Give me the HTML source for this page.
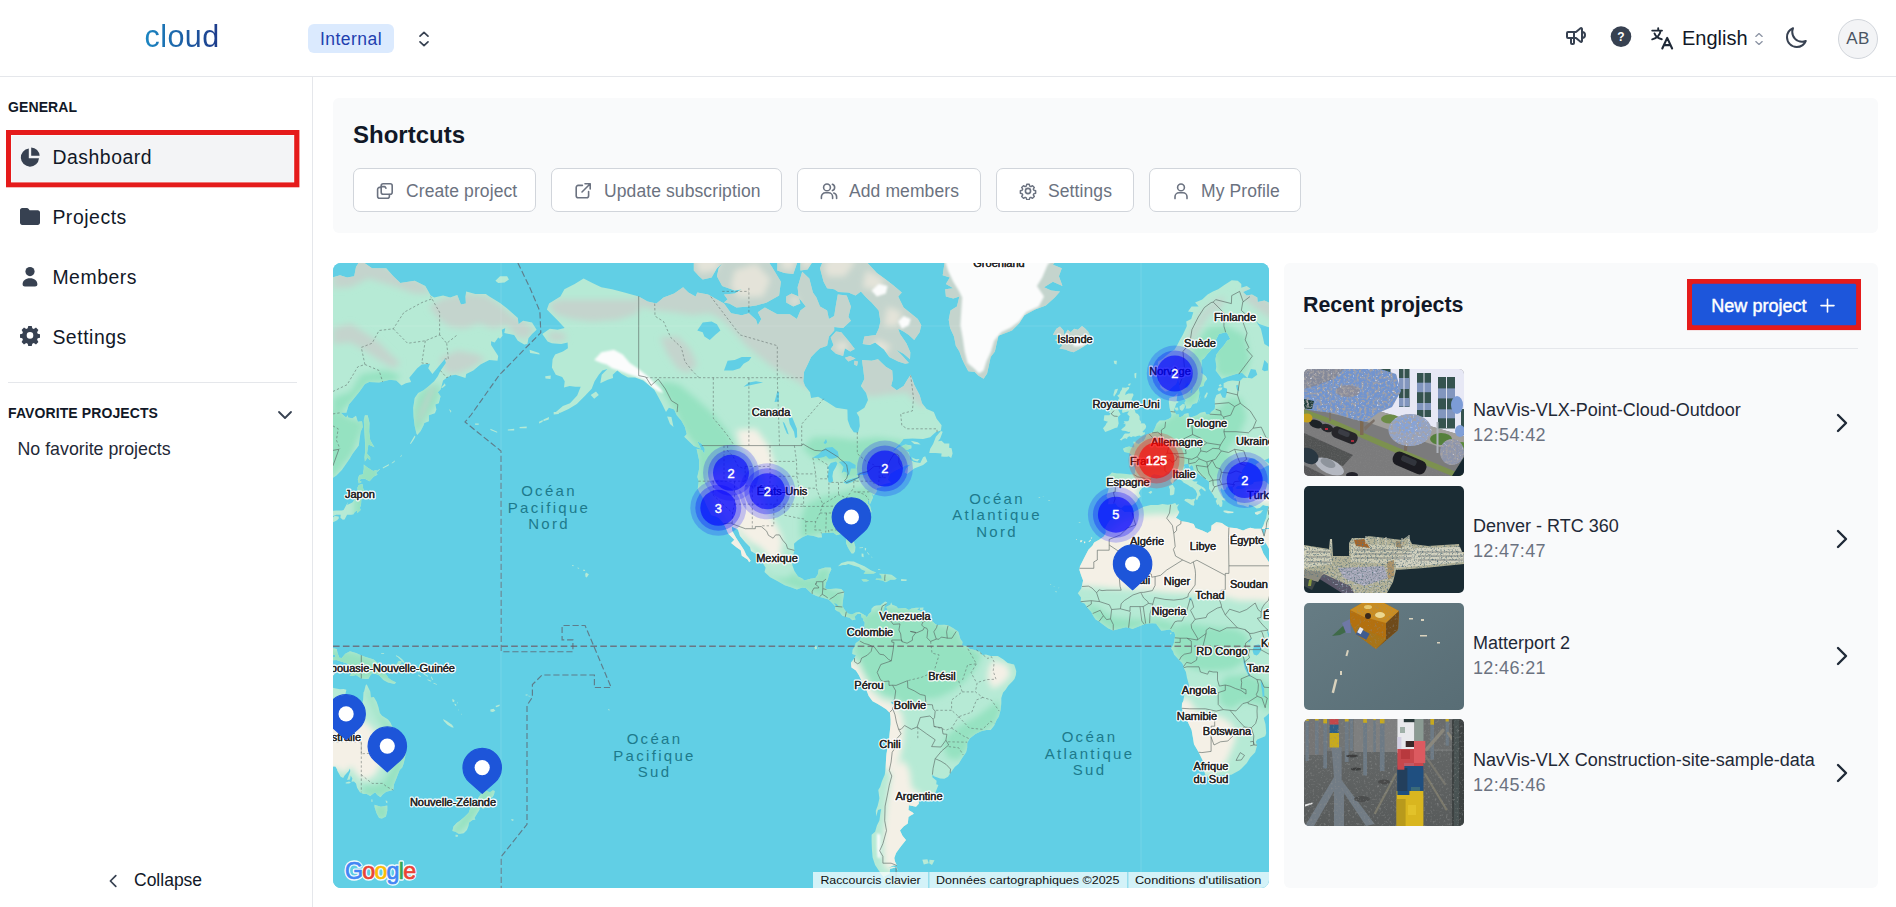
<!DOCTYPE html>
<html lang="en">
<head>
<meta charset="utf-8">
<title>Dashboard</title>
<style>
*{box-sizing:border-box;margin:0;padding:0}
html,body{width:1896px;height:907px;overflow:hidden;background:#fff}
body{font-family:"Liberation Sans",sans-serif;color:#1f2937;position:relative}
.a{position:absolute;white-space:nowrap;line-height:1}
.hdr{left:0;top:0;width:1896px;height:77px;border-bottom:1px solid #e5e7eb;background:#fff}
.side{left:0;top:77px;width:313px;height:830px;border-right:1px solid #e5e7eb;background:#fff}
.logo{left:144.5px;top:21px;font-size:30.5px;letter-spacing:.45px;background:linear-gradient(90deg,#1b86c2 0%,#1e3a8a 100%);-webkit-background-clip:text;background-clip:text;color:transparent;}
.badge{left:308px;top:24px;width:86px;height:29px;border-radius:6px;background:#dbeafe;color:#1e40af;font-size:17.5px;text-align:center;line-height:31px;letter-spacing:.45px}
.sec{font-weight:700;font-size:14px;color:#111827;letter-spacing:.1px}
.nav{font-size:19.4px;color:#111827;left:52.4px;letter-spacing:.55px;margin-top:.6px}
.sel{left:6px;top:130px;width:293px;height:57px;border:4.5px solid #e8171c;background:#f3f4f6}
.panel{background:#f9fafb;border-radius:6px}
.h2{font-weight:700;color:#111827}
.btn{top:168px;height:44px;border:1px solid #d1d5db;border-radius:7px;background:#fff;color:#6b7280;font-size:17.5px;letter-spacing:.1px}
.btn span{position:absolute;top:12.5px;line-height:18px}
.btn svg{position:absolute;top:13px;width:18px;height:18px;fill:none;stroke:#6b7280;stroke-width:1.6;stroke-linecap:round;stroke-linejoin:round}
.thumb{left:1304px;width:160px;height:107px;border-radius:5px;overflow:hidden}
.pt{left:1473px;font-size:18px;color:#1f2937;margin-top:.4px}
.ps{left:1473px;font-size:18px;color:#6b7280;letter-spacing:.35px;margin-top:.3px}
.chev{left:1834px;width:16px;height:22px;fill:none;stroke:#1f2937;stroke-width:2.4;stroke-linecap:round;stroke-linejoin:round}
svg{display:block}
</style>
</head>
<body>
<!-- HEADER -->
<div class="a hdr"></div>
<div class="a logo">cloud</div>
<div class="a badge">Internal</div>
<svg class="a" style="left:418px;top:30px;width:12px;height:18px" viewBox="0 0 12 18" fill="none" stroke="#374151" stroke-width="1.7" stroke-linecap="round" stroke-linejoin="round"><path d="M2 6.2 6 2.4l4 3.8M2 11.8 6 15.6l4-3.8"/></svg>

<!-- header right icons -->
<svg class="a" style="left:1564.4px;top:24.4px;width:24px;height:24px" viewBox="0 0 24 24" fill="none" stroke="#374151" stroke-width="2" stroke-linecap="round" stroke-linejoin="round"><path d="M18 8a3 3 0 0 1 0 6"/><path d="M10 8v11a1 1 0 0 1-1 1H8a1 1 0 0 1-1-1v-5"/><path d="M12 8l4.524-3.770a.9.9 0 0 1 1.476.692v12.156a.9.9 0 0 1-1.476.692L12 14H4a1 1 0 0 1-1-1V9a1 1 0 0 1 1-1h8"/></svg>
<svg class="a" style="left:1610px;top:26px;width:22px;height:22px" viewBox="0 0 22 22"><circle cx="11" cy="10.6" r="10.3" fill="#374151"/><text x="11" y="15" font-family="Liberation Sans,sans-serif" font-weight="700" font-size="12" text-anchor="middle" fill="#fff">?</text></svg>
<svg class="a" style="left:1650px;top:26px;width:25px;height:25px" viewBox="0 0 25 25" fill="none" stroke="#1f2937" stroke-width="1.900" stroke-linecap="round" stroke-linejoin="round"><path d="M2.200 4.600H12M8.200 2.200v2.400M10.600 4.800C10 8.600 7.400 11.900 2.200 13.400M4.500 7.400C5.600 10.300 8 12.500 11.800 13.300"/><path d="M12.300 22.500l4.900-10.600 4.900 10.600M14 19.100h6.400" stroke-width="2.100"/></svg>
<div class="a" style="left:1682px;top:27px;font-size:20px;color:#111827;line-height:22px">English</div>
<svg class="a" style="left:1754px;top:32px;width:10px;height:14px" viewBox="0 0 10 14" fill="none" stroke="#8b93a3" stroke-width="1.300" stroke-linecap="round" stroke-linejoin="round"><path d="M1.800 4.400 5 1.600l3.200 2.800M1.800 9.600 5 12.400l3.200-2.800"/></svg>
<svg class="a" style="left:1783.6px;top:26.300px;width:24px;height:24px" viewBox="0 0 24 24" fill="none" stroke="#374151" stroke-width="2" stroke-linecap="round" stroke-linejoin="round"><path d="M21.752 15.002A9.718 9.718 0 0 1 18 15.750c-5.385 0-9.750-4.365-9.750-9.750 0-1.330.266-2.597.748-3.752A9.753 9.753 0 0 0 3 11.250C3 16.635 7.365 21 12.750 21a9.753 9.753 0 0 0 9.002-5.998z"/></svg>
<div class="a" style="left:1838px;top:19px;width:40px;height:40px;border-radius:50%;background:#f3f4f6;border:1px solid #d1d5db;color:#4b5563;font-size:17px;text-align:center;line-height:38px;letter-spacing:.3px">AB</div>

<!-- SIDEBAR -->
<div class="a side"></div>
<div class="a sec" style="left:8px;top:100px">GENERAL</div>
<svg class="a" style="left:0;top:125px;width:312px;height:70px" viewBox="0 125 312 70"><rect x="6" y="130" width="293.400" height="57.300" fill="#e51b1b"/><rect x="11" y="135" width="283.200" height="47.400" fill="#fbfeff"/><rect x="11.600" y="135.600" width="282" height="46.200" fill="#f3f4f6"/></svg>
<svg class="a" style="left:20px;top:147px;width:20px;height:20px" viewBox="0 0 20 20"><path d="M8.8 1.500A9.100 9.100 0 1 0 19 11.200H8.800z" fill="#374151"/><path d="M11.200 0.400v8.400h8.400A8.600 8.600 0 0 0 11.200 .4z" fill="#374151"/></svg>
<div class="a nav" style="top:147px">Dashboard</div>
<svg class="a" style="left:20px;top:207px;width:20px;height:20px" viewBox="0 0 20 20"><path d="M0 3.200C0 2 1 1 2.200 1h4.600c.8 0 1.500.4 1.900 1l.9 1.300h8.200c1.200 0 2.200 1 2.200 2.200v10.300c0 1.200-1 2.200-2.200 2.200H2.200C1 18 0 17 0 15.800z" fill="#374151"/></svg>
<div class="a nav" style="top:207px">Projects</div>
<svg class="a" style="left:20px;top:266px;width:20px;height:22px" viewBox="0 0 20 22"><circle cx="10" cy="5.600" r="4.600" fill="#374151"/><path d="M2.600 18.200c0-3.600 3-6 7.400-6s7.400 2.400 7.400 6c0 1.300-1 2.300-2.300 2.300H4.900c-1.300 0-2.300-1-2.300-2.300z" fill="#374151"/></svg>
<div class="a nav" style="top:267px">Members</div>
<svg class="a" style="left:20px;top:326px;width:20px;height:20px" viewBox="0 0 20 20"><path fill="#374151" fill-rule="evenodd" d="M8.300 0.400h3.400l.6 2.500 1.500.6 2.200-1.300 2.400 2.400-1.300 2.200.6 1.500 2.500.6v3.400l-2.500.6-.6 1.500 1.300 2.200-2.400 2.400-2.200-1.300-1.500.6-.6 2.500H8.300l-.6-2.500-1.500-.6L4 19l-2.400-2.400 1.300-2.200-.6-1.500-2.500-.6V8.900l2.500-.6.6-1.500L1.600 4.600 4 2.200l2.200 1.300 1.500-.6zM10 6.700a3.300 3.300 0 1 0 0 6.600 3.300 3.300 0 0 0 0-6.600z" transform="translate(0 -.6)"/></svg>
<div class="a nav" style="top:327px">Settings</div>
<div class="a" style="left:8px;top:382px;width:289px;height:1px;background:#e5e7eb"></div>
<div class="a sec" style="left:8px;top:406px">FAVORITE PROJECTS</div>
<svg class="a" style="left:277px;top:409px;width:16px;height:12px" viewBox="0 0 16 12" fill="none" stroke="#374151" stroke-width="1.800" stroke-linecap="round" stroke-linejoin="round"><path d="M2 3l6 6 6-6"/></svg>
<div class="a" style="left:17.5px;top:441px;font-size:17.8px;color:#1f2937">No favorite projects</div>
<svg class="a" style="left:107px;top:873px;width:12px;height:16px" viewBox="0 0 12 16" fill="none" stroke="#374151" stroke-width="1.700" stroke-linecap="round" stroke-linejoin="round"><path d="M8.800 2.600 3.400 8l5.400 5.400"/></svg>
<div class="a" style="left:134px;top:872px;font-size:17.5px;color:#111827">Collapse</div>

<!-- SHORTCUTS -->
<div class="a panel" style="left:333px;top:98px;width:1545px;height:135px"></div>
<div class="a h2" style="left:353px;top:123px;font-size:24px">Shortcuts</div>
<div class="a btn" style="left:353px;width:183px"><svg style="left:22px" viewBox="0 0 18 18"><rect x="5.200" y="1.800" width="11" height="10.400" rx="2"/><path d="M5 5.400H3.600a2 2 0 0 0-2 2v6.800a2 2 0 0 0 2 2h7.800a2 2 0 0 0 2-2v-1.600"/><path d="M5.200 4.600h3.600l1.200 1.600"/></svg><span style="left:52px">Create project</span></div>
<div class="a btn" style="left:551px;width:231px"><svg style="left:22px" viewBox="0 0 18 18"><path d="M8.400 3.400H4.200a2 2 0 0 0-2 2v8.400a2 2 0 0 0 2 2h8.400a2 2 0 0 0 2-2V9.600"/><path d="M8 10l8-8M11 1.800h5.200V7"/></svg><span style="left:52px">Update subscription</span></div>
<div class="a btn" style="left:797px;width:184px"><svg style="left:22px" viewBox="0 0 18 18"><circle cx="7" cy="5.400" r="3.400"/><path d="M1.400 16.400v-1.600c0-2.200 1.800-4 4-4h3.200c2.200 0 4 1.800 4 4v1.600"/><path d="M12.400 2.200a3.400 3.400 0 0 1 0 6.400M16.600 16.400v-1.600c0-1.800-1.200-3.300-2.800-3.800"/></svg><span style="left:51px">Add members</span></div>
<div class="a btn" style="left:996px;width:138px"><svg style="left:22px" viewBox="0 0 18 18"><circle cx="9" cy="9" r="2.600"/><path d="M7.600 1.600h2.800l.5 2 1.300.6 1.800-1.100 2 2-1.100 1.800.6 1.300 2 .5v2.800l-2 .5-.6 1.300 1.100 1.800-2 2-1.800-1.100-1.300.6-.5 2H7.600l-.5-2-1.300-.6L4 17.100l-2-2 1.100-1.800-.6-1.300-2-.5V8.700l2-.5.6-1.300L2 5.100l2-2 1.800 1.100 1.300-.6z" transform="translate(.9 .9) scale(.9)"/></svg><span style="left:51px">Settings</span></div>
<div class="a btn" style="left:1149px;width:152px"><svg style="left:22px" viewBox="0 0 18 18"><circle cx="9" cy="5.400" r="3.400"/><path d="M3 16.600v-1.800c0-2.200 1.800-4 4-4h4c2.200 0 4 1.800 4 4v1.800"/></svg><span style="left:51px">My Profile</span></div>

<!-- RECENT PROJECTS -->
<div class="a panel" style="left:1284px;top:263px;width:594px;height:625px"></div>
<div class="a h2" style="left:1303px;top:295px;font-size:21.4px">Recent projects</div>
<svg class="a" style="left:1680px;top:270px;width:190px;height:70px" viewBox="1680 270 190 70"><rect x="1687" y="279" width="174" height="51.100" fill="#e51b1b"/><rect x="1692" y="283.800" width="164.100" height="41.500" rx="1.500" fill="#1d56db"/><path d="M1827.500 299.200v12.800M1821 305.600h13" stroke="#fff" stroke-width="1.600" stroke-linecap="round" fill="none"/></svg>
<div class="a" style="left:1711.300px;top:296.500px;font-size:18px;color:#fff;-webkit-text-stroke:.45px #fff;letter-spacing:.02px">New project</div>
<div class="a" style="left:1304px;top:348px;width:554px;height:1px;background:#e5e7eb"></div>

<!-- MAP -->
<svg class="a" style="left:333px;top:263px;width:936px;height:625px;border-radius:8px;background:#61cfe5" width="936" height="625" viewBox="0 0 936 625">
<defs><clipPath id="landclip"><path d="M209.3,71.0 216.8,65.8 224.6,66.7 231.7,64.9 225.0,57.7 213.9,46.5 216.1,40.6 227.4,33.6 231.4,26.3 241.7,21.0 250.6,15.5 259.4,19.9 268.3,24.2 279.0,26.3 291.4,29.5 305.7,33.6 314.6,38.6 323.4,40.6 330.6,34.6 341.2,30.5 350.1,24.2 355.4,29.5 362.6,33.6 364.3,29.5 375.0,31.5 391.0,40.6 398.1,50.3 408.8,52.2 415.9,50.3 423.0,56.8 424.8,62.2 428.3,55.9 424.8,49.3 431.9,44.5 444.3,51.2 456.8,51.2 463.9,55.9 467.4,47.4 472.8,43.6 465.7,34.6 464.6,24.2 469.2,8.7 476.3,15.5 479.9,29.5 483.4,34.6 487.0,43.6 494.1,47.4 495.9,55.9 501.2,53.1 503.0,41.6 504.8,31.5 513.7,32.6 517.9,43.6 515.4,54.0 517.9,57.7 510.1,64.9 501.2,64.0 501.2,67.5 495.9,73.6 494.1,82.7 487.0,85.2 483.4,88.4 478.1,93.9 474.6,101.5 471.0,109.0 470.3,118.2 472.1,123.1 477.0,129.2 478.1,135.1 485.2,133.8 494.1,139.0 503.0,144.7 514.4,146.6 514.7,157.0 517.2,164.1 520.8,169.2 525.0,169.8 526.8,162.9 526.1,154.0 523.6,149.7 531.4,144.7 535.0,137.1 533.2,129.9 527.9,123.1 531.4,116.1 530.4,107.5 529.0,97.0 538.6,97.8 545.0,96.2 552.8,103.8 559.2,107.5 559.9,116.1 558.1,123.1 563.8,127.2 570.6,123.1 574.8,116.1 577.7,111.8 581.2,121.7 586.6,131.9 589.0,140.3 593.7,146.0 600.8,149.1 603.6,155.8 608.6,162.3 607.9,167.5 602.6,169.2 597.2,174.3 590.1,176.0 579.4,175.4 570.6,176.0 567.0,180.4 561.7,185.3 557.4,191.6 553.8,194.3 558.8,190.1 565.2,184.7 572.3,181.5 578.4,182.6 578.4,185.3 572.3,187.4 575.9,189.5 576.6,193.2 577.7,197.3 581.2,198.9 587.3,199.9 590.1,194.3 592.2,193.2 594.4,198.4 590.1,201.9 581.2,205.5 574.1,210.9 571.6,209.4 573.0,205.5 577.7,201.4 572.3,202.4 568.8,204.5 563.4,206.9 557.4,210.4 555.6,214.8 554.9,216.7 557.0,218.6 558.1,219.6 553.8,220.5 549.2,221.7 545.0,223.1 551.0,223.4 543.9,225.0 543.5,229.0 540.7,232.4 538.6,230.4 540.0,234.5 537.8,239.4 536.8,241.4 535.4,235.8 534.6,240.3 537.1,243.0 538.6,248.9 535.0,251.5 530.0,254.7 525.4,257.7 522.6,260.1 519.0,262.8 517.6,269.0 518.3,272.7 520.6,277.6 522.4,284.0 522.0,288.4 520.4,290.6 518.6,290.6 516.2,286.8 514.4,283.6 513.0,280.0 513.0,275.6 510.8,272.7 508.3,270.7 503.7,272.3 500.2,269.5 495.9,269.9 492.3,269.9 488.4,270.3 489.1,274.4 485.2,274.6 480.6,272.9 474.6,272.1 469.9,274.0 464.6,277.6 461.0,280.8 461.4,287.6 459.6,295.1 459.3,302.0 461.4,308.1 465.0,313.4 469.2,315.5 471.4,317.4 477.4,315.7 482.4,314.9 484.9,311.2 485.6,306.6 492.3,304.5 497.7,304.5 498.4,306.6 495.9,311.5 494.8,316.4 493.0,319.4 492.0,324.6 493.8,326.3 497.7,325.9 503.0,325.5 508.3,326.1 511.2,329.0 510.1,336.4 509.4,342.9 511.9,347.3 515.1,350.5 519.0,351.4 522.9,349.4 526.1,348.9 530.7,351.6 532.2,352.7 531.4,356.6 528.6,354.5 527.9,350.9 524.3,351.0 521.5,353.7 522.6,356.4 519.4,357.2 516.5,354.8 512.2,353.7 509.4,352.7 506.2,348.7 504.4,348.3 501.9,346.5 502.3,343.3 498.4,339.3 495.5,336.4 490.6,335.1 483.4,333.1 478.8,330.7 472.8,325.0 469.2,324.6 463.9,326.5 458.6,324.6 451.8,322.2 444.3,318.1 437.2,314.2 431.5,308.9 432.6,304.7 428.7,298.2 423.0,291.1 418.0,288.0 417.0,284.0 412.3,279.2 407.0,273.1 404.9,266.6 398.8,263.6 399.2,267.8 403.1,274.8 407.0,280.8 410.9,286.8 413.4,292.3 415.2,294.3 417.7,297.8 416.2,299.3 414.5,296.6 408.8,292.7 407.7,287.2 403.4,284.2 398.1,280.0 401.3,276.8 395.3,270.7 392.1,263.6 390.3,259.9 386.0,255.2 382.8,253.5 378.2,252.2 373.6,243.0 371.4,237.6 366.8,229.9 364.7,225.7 365.8,218.2 364.3,214.1 366.1,206.0 366.1,197.3 363.6,185.8 369.0,186.9 371.4,191.1 371.8,185.8 369.0,180.9 364.3,178.2 367.9,185.8 360.8,183.1 356.9,179.3 351.2,173.8 353.7,170.9 351.9,164.1 348.3,157.6 343.7,152.2 341.2,146.6 335.9,144.7 333.0,149.1 328.4,139.7 324.9,133.2 321.3,126.8 316.3,122.4 310.3,117.5 302.1,114.4 295.0,114.4 288.6,111.1 284.3,107.5 279.7,111.8 280.1,115.1 274.7,116.8 267.3,120.3 268.7,111.8 274.4,106.0 269.4,107.5 265.8,111.8 261.6,118.2 258.7,125.8 252.3,132.5 243.8,140.9 235.6,146.0 227.4,149.7 221.4,150.3 229.9,142.9 237.0,140.3 244.2,132.5 247.7,123.8 242.4,123.8 236.7,123.1 231.0,124.5 231.7,118.2 229.2,114.0 222.8,111.8 218.9,104.5 219.6,96.2 222.1,91.6 229.9,88.4 234.9,85.2 234.6,79.4 228.2,81.1 218.9,80.3 214.6,78.6 209.3,71.0ZM588.3,62.2 584.8,55.9 577.7,50.3 570.6,44.5 565.2,33.6 568.8,29.5 559.9,22.1 552.8,16.6 543.9,9.9 535.0,0.6 526.1,-10.4 519.0,-14.2 504.8,-11.6 492.3,-7.9 487.0,5.3 490.6,18.8 494.1,25.3 501.2,26.3 505.5,28.9 515.4,29.5 522.6,32.6 527.9,28.4 533.2,34.6 538.6,39.6 545.7,47.4 547.4,58.6 545.7,65.8 542.8,71.9 531.4,73.6 529.7,81.1 536.8,81.9 542.1,79.4 551.0,86.4 556.3,93.9 565.2,98.5 572.3,100.8 575.9,100.0 569.5,93.1 563.4,86.8 570.6,90.8 577.0,96.2 577.3,89.2 573.4,80.3 567.0,71.0 565.2,65.8 570.6,68.4 575.9,71.9 581.2,76.9 586.6,69.3 588.3,62.2ZM391.0,39.6 396.3,40.6 403.4,44.5 415.9,43.6 423.0,42.6 433.7,39.6 446.1,32.6 447.9,18.8 439.0,4.1 433.7,-4.2 423.0,-7.9 412.3,-3.0 401.7,-6.7 391.0,-1.8 385.7,5.3 383.9,13.3 389.2,23.1 401.7,27.4 408.8,26.3 401.7,30.5 391.0,31.5 394.6,36.6 391.0,39.6ZM369.7,16.6 378.6,14.4 383.9,5.3 394.6,-4.2 398.1,-11.6 389.2,-19.3 376.8,-23.3 364.3,-19.3 360.8,-4.2 360.8,7.6 366.1,13.3 369.7,16.6ZM453.2,39.6 460.3,43.6 467.4,40.6 465.7,33.6 458.6,30.5 453.2,33.6 453.2,39.6ZM444.3,7.6 451.4,9.9 460.3,11.0 463.9,0.6 462.1,-14.2 451.4,-16.7 444.3,-6.7 444.3,7.6ZM467.4,7.6 474.6,6.4 479.9,-1.8 485.2,-14.2 476.3,-19.3 467.4,-12.9 467.4,7.6ZM497.7,74.4 503.0,68.4 508.3,69.3 515.4,77.8 521.8,86.0 517.2,88.4 511.9,85.2 510.1,93.1 503.0,90.8 497.7,86.0 500.5,81.9 497.7,74.4ZM511.9,94.7 517.2,93.1 522.6,95.4 515.4,98.5 511.9,94.7ZM521.5,97.8 525.0,98.5 524.0,103.0 521.1,101.5ZM596.2,190.1 597.2,185.8 600.1,180.9 602.9,173.8 607.9,168.1 609.7,168.7 607.2,175.4 605.0,178.2 608.6,177.7 611.4,180.4 616.4,180.4 616.1,184.7 618.6,185.3 619.6,190.6 618.2,195.0 615.7,193.2 614.3,193.7 610.7,193.7 608.2,193.5 608.6,190.6 602.6,190.1 596.2,190.1ZM577.7,177.7 584.8,179.3 587.6,181.5 581.2,180.9 577.7,177.7ZM578.4,194.3 583.0,196.3 586.6,196.1 584.4,198.4 580.2,197.3 578.4,194.3ZM334.1,153.4 338.4,154.0 340.5,164.1 337.0,161.1 334.1,153.4ZM257.7,131.9 263.0,128.5 265.8,131.9 261.2,135.8 257.7,131.9ZM196.5,86.8 206.1,90.0 206.8,91.6 197.2,90.0 196.5,86.8ZM212.2,113.3 217.8,112.6 217.5,116.1 212.5,115.4ZM220.7,149.1 226.7,147.9 225.7,150.9 220.7,151.6ZM210.4,156.4 216.1,154.0 215.7,156.4 210.4,158.2ZM206.1,158.8 209.7,157.0 209.7,158.8 206.1,160.6ZM650.6,115.8 645.2,112.6 641.7,109.0 635.3,108.2 631.7,101.5 629.2,96.2 626.4,88.4 622.8,82.7 621.0,73.6 617.1,64.9 615.7,56.8 617.5,47.4 623.9,43.6 626.4,33.6 620.3,35.6 612.9,33.6 612.2,26.3 620.3,25.3 612.9,21.0 616.8,14.4 609.7,12.2 611.4,0.6 607.9,-11.6 604.3,-23.3 664.8,-44.3 735.9,-30.1 730.6,-16.7 727.0,-6.7 719.9,1.8 728.8,5.3 725.9,13.3 729.5,23.1 719.9,18.8 711.0,24.2 718.1,27.4 727.0,28.4 721.7,34.6 712.8,42.6 702.1,46.5 691.4,52.2 686.1,60.4 679.0,67.5 672.6,70.1 665.5,72.7 663.7,80.3 661.9,88.4 657.7,93.9 655.9,102.3 654.1,110.4 650.6,115.8ZM726.3,85.6 732.3,86.4 735.9,88.0 740.5,89.2 746.6,86.0 751.9,82.7 755.4,80.3 758.6,75.3 755.1,68.4 751.9,65.3 749.0,63.1 744.8,66.7 741.2,65.8 737.7,69.3 734.8,66.7 731.3,71.9 730.6,67.5 727.0,63.6 723.4,65.8 721.3,69.3 719.9,71.9 727.0,71.9 728.1,75.3 721.7,76.9 728.1,80.3 729.1,82.7 726.3,85.6ZM505.1,303.2 508.3,300.1 511.9,298.9 514.4,298.2 520.8,298.5 525.0,300.5 531.4,303.2 535.0,305.5 538.2,307.6 543.2,309.5 540.3,310.8 530.7,311.0 532.5,308.1 528.6,306.6 526.1,304.3 520.8,302.8 515.4,301.1 512.6,302.0 509.8,302.0 505.1,303.2ZM546.0,310.8 552.1,311.0 558.5,311.7 561.0,313.4 563.8,315.7 561.7,316.8 557.4,316.8 552.8,319.2 549.2,317.4 542.5,316.6 543.2,315.5 548.9,315.7 548.2,312.7 546.0,310.8ZM528.4,316.6 532.2,316.0 536.1,317.5 533.9,318.5 530.4,318.5 528.4,316.6ZM568.1,316.0 573.8,316.4 573.4,317.9 568.1,318.1ZM586.9,344.7 590.5,344.4 590.1,346.9 586.9,347.1ZM186.6,164.1 193.7,163.5 193.7,165.2 186.6,165.2ZM174.8,166.4 181.2,165.8 181.2,167.5 174.8,167.5ZM142.1,160.6 145.7,160.6 145.7,161.7 142.1,161.7ZM157.4,165.8 164.2,168.7 164.2,169.8 157.4,167.0ZM528.6,290.4 530.4,290.8 530.7,294.3 528.6,293.5ZM531.8,284.8 533.2,285.2 532.9,287.6 531.8,287.2ZM526.5,284.4 530.0,284.2 530.0,285.0 526.5,285.2ZM533.9,289.6 536.1,291.9 536.4,291.5 534.6,289.2ZM538.9,293.1 539.3,294.7 538.6,294.7ZM545.0,306.2 547.4,306.2 547.1,307.0 545.0,307.0ZM252.2,311.2 253.0,309.5 255.9,311.3 253.8,314.4 252.5,313.8ZM249.8,306.8 251.6,306.8 252.3,307.9 250.6,308.1ZM244.3,304.5 246.3,304.9 245.9,305.7 244.9,305.5ZM239.0,302.2 240.6,302.0 240.4,303.2 239.2,303.0ZM931.3,273.1 930.7,276.8 932.2,279.2 934.3,282.4 936.4,286.4 939.3,291.5 942.5,295.1 945.7,300.9 946.4,305.5 967.0,306.6 967.0,264.9 932.2,264.9ZM530.0,357.3 532.2,352.3 533.9,354.5 535.7,350.9 538.2,348.7 538.6,345.5 541.0,343.3 543.2,342.6 547.4,342.2 552.1,338.4 554.2,339.3 553.5,341.1 551.4,342.9 552.4,344.4 553.8,343.6 557.4,341.8 558.1,339.3 559.2,341.8 563.4,343.3 565.2,345.5 572.3,345.1 575.9,346.9 578.4,345.5 583.0,344.7 586.9,344.7 584.1,346.5 588.3,348.3 590.8,350.1 593.7,352.7 599.0,358.0 602.6,361.3 604.3,362.0 611.4,361.8 615.0,362.3 620.3,365.2 623.2,367.3 625.3,368.8 627.4,375.9 629.6,379.1 628.9,382.6 632.8,383.0 634.9,384.1 636.3,385.8 641.7,386.9 647.0,388.7 649.5,391.9 653.0,391.5 657.7,393.0 664.8,393.1 670.1,396.2 674.7,400.1 681.1,401.5 682.2,404.4 683.3,408.3 682.9,411.9 681.5,415.9 679.4,418.4 675.4,422.4 672.6,426.7 670.1,429.6 668.3,435.1 668.3,440.6 667.6,447.0 665.8,453.7 663.7,456.7 661.2,462.5 657.7,466.9 653.4,467.1 648.1,468.2 642.4,470.9 636.7,475.6 634.2,480.0 634.2,484.8 633.1,489.2 629.2,494.9 625.7,500.7 621.8,504.0 617.1,510.4 615.0,513.8 611.4,515.8 607.2,515.6 601.5,513.4 599.4,511.7 599.4,514.3 603.6,517.7 603.3,521.2 605.4,522.1 602.6,529.3 597.2,532.4 590.1,533.8 585.8,533.4 585.8,540.7 583.0,543.8 575.9,542.2 575.5,546.9 579.4,549.3 580.9,550.7 577.7,552.4 575.5,554.1 574.8,560.5 570.6,563.6 567.0,567.6 569.5,572.8 573.0,577.0 568.8,582.3 566.3,585.6 563.1,590.0 561.3,595.1 562.0,598.5 563.8,602.2 560.2,602.5 555.3,604.9 559.9,603.7 563.8,604.3 564.5,607.2 567.0,612.0 570.6,615.1 575.2,616.3 570.6,618.8 567.7,623.8 561.7,621.3 556.3,619.4 551.0,615.1 546.4,608.4 542.1,601.9 539.6,594.5 538.9,586.1 538.6,578.1 538.6,571.7 542.1,568.7 543.9,562.6 546.4,557.6 547.4,550.2 548.2,545.9 545.0,546.9 543.2,553.6 542.8,547.8 544.6,543.1 545.7,538.4 546.4,535.2 545.3,527.0 547.1,523.9 548.9,518.2 551.7,511.7 552.4,507.4 552.8,501.1 553.1,494.9 553.5,490.8 554.9,482.8 556.0,476.4 556.7,469.4 557.6,461.3 557.6,456.4 557.0,450.0 553.5,446.6 548.5,443.2 543.9,440.6 539.6,438.2 535.7,432.9 533.9,428.2 532.5,426.0 530.4,421.3 527.5,415.5 525.8,411.9 522.9,407.6 518.5,404.4 517.9,399.7 521.1,395.5 522.9,392.2 519.2,391.0 519.7,386.6 522.2,383.0 522.6,380.2 524.3,379.1 526.8,377.3 528.2,373.8 531.4,373.4 532.9,369.1 531.4,363.4 531.8,359.5 530.0,357.3ZM563.1,604.3 557.0,606.0 556.7,610.8 551.0,613.8 554.6,617.5 563.4,619.4 570.6,618.1 575.2,616.0 570.6,614.4 566.6,611.4 564.5,607.2 563.1,604.3ZM786.0,246.5 788.2,246.1 791.7,249.1 796.3,248.7 799.9,249.6 804.9,246.7 810.6,243.7 817.7,241.9 825.1,242.1 829.4,241.0 834.7,241.7 838.3,241.2 842.2,239.9 843.6,242.1 846.1,241.0 844.3,243.9 844.7,246.5 846.3,249.1 845.0,251.7 842.9,254.7 845.8,256.5 848.2,258.2 853.9,259.0 860.7,261.1 862.5,264.9 869.2,267.4 874.6,269.9 878.1,267.4 878.5,262.4 883.4,259.0 888.8,260.1 892.3,262.6 895.9,264.5 903.7,265.3 910.1,267.6 913.3,266.1 917.2,264.7 921.8,265.7 928.6,265.7 931.1,273.1 929.3,279.2 926.5,278.4 922.9,271.5 922.2,272.7 925.4,279.2 927.9,284.0 930.4,290.4 933.6,295.4 938.2,302.8 939.6,306.6 967.0,306.6 967.0,474.9 951.4,437.0 949.2,441.8 943.9,445.5 938.2,447.9 933.2,453.0 930.7,455.0 932.5,461.3 933.2,470.2 932.2,473.3 924.3,476.4 922.9,478.8 924.0,482.8 922.2,489.2 917.2,494.5 913.7,500.3 908.3,505.7 906.2,507.6 898.4,511.7 892.3,512.1 885.9,512.1 878.1,515.1 874.2,513.4 872.6,513.2 872.2,511.3 870.6,506.4 872.1,501.9 868.5,494.9 865.7,489.2 861.0,481.2 860.0,474.9 858.6,467.1 854.6,458.6 850.7,450.0 848.8,445.3 849.0,440.6 850.4,437.7 851.4,431.5 854.6,428.2 856.1,422.4 853.9,414.4 852.9,409.0 850.7,404.7 850.4,402.6 849.1,400.1 846.1,396.9 841.1,391.5 840.1,388.3 838.1,385.5 840.4,381.6 841.1,379.1 841.8,374.8 842.2,372.3 841.3,368.9 839.0,368.8 837.2,366.6 831.9,367.3 828.3,367.7 825.1,363.4 823.0,360.6 819.1,360.2 815.5,360.4 811.3,361.3 806.3,363.2 799.5,366.1 796.0,364.8 792.8,364.3 785.7,365.9 780.0,367.5 775.0,365.2 768.6,360.6 766.1,358.4 762.6,356.6 760.1,352.7 758.3,349.1 754.7,345.1 751.5,340.4 747.6,338.9 748.0,334.5 744.8,330.2 748.3,325.4 750.1,317.5 748.3,312.7 746.4,307.0 746.9,303.5 750.5,296.2 755.4,286.8 759.4,282.8 761.1,279.6 766.1,276.8 770.7,273.6 772.9,269.5 772.2,264.9 774.3,261.1 776.8,257.3 780.0,256.0 782.8,254.1 785.0,249.1 786.0,246.5ZM788.2,245.2 784.6,243.4 782.1,240.3 778.9,241.2 775.0,241.2 775.7,236.7 773.4,233.6 775.4,226.7 776.1,222.0 775.5,217.7 773.9,213.8 777.1,211.4 778.9,209.4 783.9,210.4 786.7,210.4 793.5,210.9 796.3,211.4 800.6,211.4 801.7,210.9 802.7,205.0 803.1,200.4 802.7,197.3 799.5,193.2 798.5,191.6 796.3,190.1 791.4,189.0 789.9,185.8 792.8,184.2 796.3,183.4 799.9,184.7 801.7,184.5 801.3,181.5 800.2,178.8 802.4,178.8 803.1,180.4 805.9,180.9 807.4,179.9 810.9,177.7 812.7,174.3 813.8,171.5 815.5,171.2 817.3,170.1 819.8,169.2 821.6,165.8 823.7,160.6 826.6,157.6 831.5,157.6 835.4,156.1 837.9,154.6 838.6,152.2 837.6,148.5 836.5,144.7 835.8,138.4 836.2,135.1 837.6,134.5 840.8,133.8 844.7,130.2 844.3,132.5 843.6,137.7 845.8,139.0 843.3,140.6 841.8,144.7 840.8,147.9 841.8,149.1 843.3,151.6 846.1,151.6 845.8,154.0 847.9,154.0 850.0,152.8 851.4,150.9 855.4,150.0 856.1,153.4 857.8,154.6 863.9,152.2 867.4,149.7 872.1,148.8 873.5,151.6 876.7,151.2 878.1,149.1 881.7,146.0 882.0,143.5 881.7,136.4 883.4,131.9 887.4,130.2 889.5,134.5 892.3,135.1 893.8,129.9 894.1,125.8 890.6,124.5 890.6,120.3 894.8,118.2 899.4,117.5 906.6,118.2 910.1,114.7 914.4,115.1 909.0,109.7 903.0,111.1 895.9,113.3 888.8,115.8 885.9,111.8 882.7,107.5 883.4,103.8 882.4,96.2 883.4,91.6 887.0,86.8 890.6,82.7 894.1,77.8 897.3,76.1 894.1,70.1 892.7,69.3 885.9,71.0 883.4,76.1 881.7,78.6 879.2,86.0 874.6,90.8 871.0,95.4 868.5,97.0 868.5,102.3 868.2,109.7 872.8,113.3 874.2,116.1 871.4,119.6 870.6,123.1 865.7,124.5 866.4,130.5 865.3,137.1 863.9,140.3 862.5,140.3 859.3,141.6 857.8,144.7 856.1,145.4 852.5,145.4 853.2,144.1 852.2,141.6 851.4,139.7 852.9,137.7 850.7,135.1 849.3,130.5 846.8,125.8 846.5,121.7 845.0,115.4 844.0,119.6 842.6,121.7 840.8,123.1 835.4,127.9 832.1,128.5 827.3,124.5 827.3,121.7 825.5,118.9 825.8,111.8 824.4,107.5 824.8,100.8 825.1,98.5 829.0,96.2 833.7,92.3 838.3,88.4 841.5,86.8 844.3,81.9 846.8,76.9 849.7,71.9 851.8,67.5 853.9,63.1 853.2,58.6 858.2,55.9 860.3,49.3 855.0,48.4 858.6,43.6 865.7,43.6 862.1,39.6 869.2,36.6 874.6,31.5 879.9,28.4 885.2,26.3 891.3,22.1 898.7,17.2 904.8,17.7 908.3,21.0 908.3,24.7 913.7,23.1 917.6,25.8 910.1,28.9 913.7,32.6 919.0,31.5 924.3,34.6 924.7,39.1 931.4,37.6 938.6,40.6 952.8,51.2 953.8,63.1 949.2,66.7 943.9,66.7 935.0,64.0 926.1,60.9 922.6,57.7 927.9,65.8 931.4,81.1 938.6,85.2 942.1,81.9 947.4,79.4 967.0,84.4 967.0,267.0 928.6,265.7 930.4,262.8 931.3,259.4 933.2,254.7 934.3,247.8 935.7,243.0 933.2,243.0 930.0,242.1 926.8,245.0 923.6,245.4 919.0,242.5 916.2,241.7 915.4,244.3 910.5,242.5 907.6,242.1 904.4,241.2 903.7,237.2 902.3,234.9 900.5,235.4 902.3,230.8 899.8,229.9 900.2,227.6 900.2,226.2 899.4,224.8 899.1,223.6 893.8,223.4 892.3,227.1 889.8,226.7 888.4,224.8 887.4,227.6 888.8,230.8 890.2,234.5 892.3,235.8 892.3,238.3 891.3,237.2 888.8,237.2 889.5,239.4 889.1,243.4 887.0,243.9 885.6,241.2 884.2,242.1 882.7,238.1 884.2,235.4 881.7,234.9 880.6,232.6 878.8,229.9 876.0,225.7 876.0,221.5 876.0,218.6 872.8,216.2 871.4,215.0 865.3,210.9 861.0,207.9 860.0,203.4 858.2,201.9 856.4,204.5 855.4,200.9 856.1,200.2 850.7,201.4 851.4,204.0 850.7,206.9 851.8,207.9 855.0,210.4 857.5,215.8 861.0,218.4 864.6,218.6 863.5,220.5 867.1,222.4 871.0,224.8 872.8,227.1 872.2,228.5 871.0,227.6 868.2,225.3 866.0,227.6 867.8,232.2 866.0,233.1 864.2,237.0 862.6,236.3 863.5,233.6 864.2,231.3 862.5,227.3 859.6,224.5 857.5,223.8 855.0,222.0 850.4,219.4 849.0,217.7 846.5,216.2 844.3,213.6 843.6,210.6 841.8,207.9 838.6,206.4 836.2,208.4 833.0,209.9 830.5,212.4 828.0,212.8 825.8,211.9 823.4,211.4 820.9,210.9 818.0,212.8 817.8,215.3 818.7,216.7 814.8,221.0 811.3,222.4 809.8,224.3 807.0,227.6 805.9,229.9 807.7,233.6 805.2,235.4 803.8,238.5 799.2,242.5 791.4,242.5 788.2,245.2ZM786.7,176.8 789.2,174.6 791.0,171.5 792.1,170.4 796.3,170.4 797.4,168.7 795.6,169.0 792.8,168.1 788.9,167.5 788.2,166.4 792.4,162.9 792.4,160.6 790.3,161.1 791.7,159.4 790.6,158.2 794.6,158.2 796.0,157.3 796.3,154.6 796.7,153.4 794.2,150.9 796.0,148.2 792.8,149.1 789.6,150.0 788.9,147.9 790.3,144.7 789.6,142.2 786.4,146.0 787.1,141.6 787.4,139.0 785.0,137.1 786.4,135.1 784.2,132.5 786.4,131.2 787.4,128.5 788.9,126.5 789.2,124.5 792.8,124.8 794.9,124.1 796.3,124.1 796.0,125.8 792.8,129.2 792.1,131.9 795.3,130.5 799.9,130.5 800.6,131.9 799.5,134.2 798.1,137.7 797.8,139.7 795.6,141.6 797.8,141.3 799.9,142.9 801.3,144.7 802.0,147.9 802.7,150.0 804.9,150.9 806.6,153.4 806.6,156.4 808.2,159.1 807.7,160.8 808.8,160.3 811.6,160.6 813.2,162.9 812.7,165.2 811.6,166.4 809.5,168.7 810.6,169.5 812.0,169.2 811.8,170.9 810.4,172.1 807.9,172.9 806.6,172.6 804.2,173.0 802.4,173.8 799.9,173.2 798.3,174.3 796.3,173.2 794.6,174.3 794.0,176.0 792.2,175.2 789.9,176.0 788.5,177.4 786.7,176.8ZM780.7,145.4 785.0,146.6 786.7,149.7 787.6,151.6 785.0,154.0 785.3,157.9 785.7,160.3 784.4,164.6 782.1,164.9 777.5,167.0 772.2,169.0 770.0,165.2 772.5,162.3 773.6,160.0 775.0,158.8 770.7,157.6 771.1,154.0 771.4,152.2 776.4,152.2 777.8,150.3 775.7,149.7 777.5,146.9 780.7,145.4ZM851.3,237.6 852.2,236.1 854.6,235.8 858.6,236.5 862.5,235.5 861.0,239.0 861.4,241.2 860.7,242.8 858.2,241.9 855.4,240.1 852.9,238.5ZM836.2,222.9 839.7,221.7 841.8,225.3 841.1,231.3 839.0,232.2 836.9,232.2 836.9,226.2 836.0,224.3ZM840.4,213.3 841.0,217.7 839.7,221.0 837.6,218.6 837.6,216.2 840.1,214.8ZM890.6,247.4 893.0,247.6 898.4,248.5 900.5,248.7 900.2,250.0 894.8,250.2 890.6,248.9ZM921.8,249.6 924.3,248.5 930.0,247.0 927.9,250.0 924.3,251.7 922.2,251.1ZM815.5,229.4 818.0,227.8 819.3,229.0 817.8,230.8 815.9,230.1ZM846.5,143.5 849.7,140.9 851.8,141.3 851.8,144.1 850.4,146.6 849.0,147.9 846.8,146.6ZM841.8,144.7 845.0,144.4 845.4,147.2 843.3,147.6 842.2,146.6ZM871.4,133.2 873.8,129.2 874.9,129.9 873.5,133.8 871.7,135.8ZM865.3,140.3 867.1,134.5 867.8,132.8 866.4,137.7ZM884.5,126.5 885.9,124.5 889.5,124.5 888.8,126.5 885.9,128.5ZM885.6,122.4 887.4,121.0 888.8,122.4 887.0,123.8ZM780.7,97.8 783.9,97.8 783.5,101.5 781.4,100.8ZM801.3,110.4 803.4,109.7 803.1,115.4 801.7,114.7ZM795.3,121.0 797.8,120.3 797.0,122.4 795.3,122.4ZM781.8,126.5 785.0,125.8 783.9,129.2 781.0,133.8 780.3,131.9ZM745.8,259.2 747.6,259.4 747.3,260.1 745.8,259.9ZM837.2,369.7 838.6,369.8 837.9,371.4 837.0,370.9ZM830.1,381.6 831.0,381.9 830.5,382.8ZM589.4,596.8 594.4,596.2 595.8,600.2 590.8,601.4ZM596.5,596.8 601.5,597.3 599.0,601.9 596.2,600.2ZM746.9,277.8 749.4,277.0 748.7,279.0 747.6,279.2ZM750.8,278.8 752.2,278.6 752.2,280.0 751.2,280.2ZM755.4,278.8 757.6,276.4 757.9,277.6 756.5,278.8ZM757.9,274.4 759.2,274.4 759.0,275.6 757.9,275.6ZM743.0,276.0 743.9,276.0 743.7,277.2ZM715.3,237.2 717.4,237.4 717.0,238.1 715.3,237.9ZM705.7,234.0 707.4,234.5 706.7,234.9 705.7,234.7ZM709.6,233.1 710.6,233.3 710.3,233.8ZM722.4,327.9 723.6,328.3 723.4,329.4 722.6,329.0ZM717.0,321.1 718.3,321.3 717.8,322.0ZM720.2,323.1 721.7,322.9 721.3,323.5ZM725.4,324.6 726.3,324.8 725.9,325.5ZM-28.6,218.2 -7.2,215.8 -0.1,214.8 3.4,212.4 8.8,206.9 12.3,201.9 16.6,195.8 19.4,191.1 25.8,182.6 26.6,176.0 27.6,168.7 29.8,164.1 29.0,158.2 24.8,158.8 23.0,152.8 19.4,155.2 15.2,154.6 14.8,152.2 13.0,154.6 7.7,149.7 13.4,149.7 15.9,141.6 19.1,137.7 26.6,128.5 31.9,121.0 36.2,118.9 46.1,119.6 56.8,116.8 63.2,117.5 68.5,122.4 72.8,120.3 78.1,118.9 76.3,114.7 84.2,105.3 88.8,101.5 97.0,100.8 95.2,105.3 99.4,111.1 106.6,102.3 111.9,95.8 113.0,100.0 107.6,107.5 104.8,113.3 101.2,118.2 95.9,123.1 90.6,127.2 85.2,129.9 81.7,135.1 80.2,144.7 80.6,154.0 81.7,162.9 83.4,170.4 84.2,172.1 87.7,168.1 90.6,162.3 91.3,160.0 95.9,158.2 95.9,152.2 101.9,150.3 103.4,146.6 102.3,141.6 105.8,140.3 107.6,133.2 104.8,129.2 107.6,126.5 110.1,117.5 113.7,114.7 117.9,112.6 122.6,111.8 132.5,115.1 133.2,111.1 140.3,107.5 147.4,101.5 156.3,97.0 164.5,97.8 165.2,93.1 158.1,81.9 158.1,78.2 161.7,79.4 165.2,74.4 167.0,75.7 169.5,72.7 168.8,66.7 172.3,64.9 171.3,70.1 181.2,71.9 184.8,77.8 191.2,81.5 194.4,81.1 195.4,75.3 199.0,71.0 203.6,66.7 199.0,59.5 190.1,57.7 185.5,61.3 184.8,54.9 174.1,45.5 167.0,40.1 156.3,33.6 152.8,31.0 142.1,31.0 133.2,28.4 132.5,33.6 132.9,40.6 127.9,41.6 124.3,32.0 117.2,34.6 110.1,32.6 101.2,34.6 97.7,32.6 92.3,23.1 81.7,17.7 67.4,19.9 60.3,13.3 53.2,5.3 39.0,5.3 27.3,-3.0 23.0,4.1 21.2,13.3 14.1,14.4 7.0,12.2 -0.1,14.4 -10.8,18.8 -17.9,7.6 -28.6,-10.4 -28.6,218.2ZM162.4,17.7 167.0,13.3 174.1,13.3 175.9,16.6 171.6,19.4 165.2,19.9ZM108.3,124.5 111.9,120.3 112.6,122.4 109.4,125.1ZM116.2,146.0 118.3,147.9 117.9,149.7 116.5,147.2ZM31.9,152.2 34.7,152.2 36.5,160.0 36.2,168.7 37.2,177.1 39.7,181.5 41.5,184.2 35.4,181.5 34.0,190.6 37.2,194.3 37.2,197.3 34.4,194.8 31.9,198.4 31.5,194.3 32.2,187.9 31.9,177.1 31.2,165.8 30.8,157.0 31.9,152.2ZM25.8,220.5 24.8,216.2 26.2,211.9 29.8,211.4 30.8,206.0 30.8,201.4 34.4,204.5 40.1,207.9 43.6,206.9 43.6,211.4 45.0,211.6 40.8,213.6 36.5,218.2 31.9,215.8 28.3,215.8 26.2,217.2 28.7,219.1 25.8,220.5ZM29.4,221.0 30.1,225.3 31.9,229.9 30.1,235.4 28.3,236.7 28.0,241.7 26.9,244.8 27.6,247.0 25.5,249.1 24.1,250.0 24.1,247.4 21.9,249.1 20.5,251.3 18.4,251.7 14.1,251.7 13.4,253.0 11.6,256.5 9.8,256.7 7.4,254.7 7.7,251.7 3.4,251.7 -0.1,253.0 -3.7,254.7 -7.2,254.3 -7.2,252.6 -1.9,247.8 3.4,247.6 8.8,247.4 10.6,247.0 13.4,241.7 15.2,239.0 14.1,242.1 19.4,239.4 23.0,234.5 24.8,228.5 24.4,224.8 25.8,222.0 29.4,221.0ZM-1.9,255.6 1.7,253.0 5.6,253.5 5.9,255.2 4.2,257.3 -0.1,259.4 -1.9,258.6ZM-10.8,257.3 -7.2,254.7 -4.0,257.3 -4.7,260.7 -5.8,265.3 -8.3,267.0 -10.1,265.7 -10.1,261.5 -11.8,259.4ZM-28.6,433.3 -21.4,432.5 -16.1,436.2 -11.8,436.6 -12.6,431.5 -9.7,429.3 -7.9,427.4 -5.4,426.7 -1.5,426.3 -1.5,424.2 1.7,425.3 7.0,426.3 10.6,426.0 13.4,426.7 12.3,431.5 10.2,434.0 8.8,437.0 11.6,439.2 15.9,441.0 21.2,444.4 26.6,446.6 28.3,443.6 30.1,437.0 30.5,429.6 31.2,428.2 32.6,422.4 33.7,421.3 35.1,424.2 37.2,428.5 37.9,434.4 40.8,434.0 43.6,438.8 45.4,444.0 46.8,450.0 49.0,452.8 52.2,454.8 55.0,456.4 57.5,459.8 59.6,464.4 63.2,465.5 63.2,468.6 65.0,470.6 68.9,474.1 71.7,474.9 71.4,480.8 71.7,484.4 73.1,489.2 71.7,496.1 70.6,500.7 69.2,504.5 66.7,507.0 65.0,511.3 63.2,516.0 61.0,521.2 60.3,527.0 53.2,528.8 49.7,531.5 47.5,534.3 44.3,532.0 42.2,529.3 40.4,530.6 37.2,533.1 33.7,531.1 30.5,531.1 26.9,529.3 24.1,524.8 23.0,520.4 20.9,518.6 18.4,518.8 19.4,515.6 17.7,512.5 17.0,516.4 14.1,517.1 15.9,511.7 17.3,508.3 17.0,505.3 15.5,508.3 11.6,512.5 10.2,515.1 7.7,513.8 4.2,507.4 4.2,506.6 2.4,503.6 -1.9,503.2 -7.2,501.1 -17.9,503.2 -28.6,507.4 -28.6,433.3ZM41.5,541.7 47.9,543.8 54.3,542.6 54.3,547.8 52.9,553.6 49.0,555.6 46.1,555.1 43.6,550.2 41.5,544.0ZM12.7,519.5 16.2,518.6 18.0,519.7 15.9,520.6 12.7,520.4ZM12.0,432.5 13.8,432.5 13.8,434.2 12.3,434.0ZM-9.7,423.8 -5.4,423.8 -5.8,425.3 -9.4,425.3ZM52.5,537.5 54.3,538.0 54.3,540.3 53.2,539.8ZM38.3,536.6 39.4,536.6 39.4,538.9 38.6,538.9ZM-7.6,385.8 -1.9,384.4 3.8,386.0 4.5,390.1 6.3,394.7 8.8,395.1 12.3,390.8 17.0,388.3 23.0,390.1 27.3,391.9 31.9,393.7 37.6,395.5 40.8,396.5 45.4,400.8 47.9,402.9 51.4,404.4 52.7,406.9 49.7,407.2 51.4,410.1 53.9,412.6 55.4,415.1 58.6,417.3 63.2,419.6 61.4,421.1 55.0,419.5 50.4,416.9 46.1,412.3 41.8,410.5 39.0,410.5 37.2,412.6 35.4,415.9 31.9,415.9 28.3,415.5 23.0,411.9 19.4,413.0 16.6,413.0 19.4,409.0 20.2,407.2 17.7,402.6 14.1,400.4 8.8,398.7 3.4,396.9 -0.8,397.2 -0.8,394.7 2.7,393.7 1.7,391.5 -3.7,393.0 -3.7,390.1 -7.6,385.8ZM54.3,402.9 57.5,402.6 60.3,400.8 61.0,402.6 63.9,400.8 65.7,397.9 68.5,397.9 68.2,400.4 65.7,402.6 62.1,405.1 56.8,405.4 54.3,402.9ZM63.2,392.2 66.0,393.7 69.2,396.2 71.4,399.0 70.3,400.1 67.8,396.9 64.6,394.0 62.8,393.0ZM76.7,402.6 79.5,404.4 81.3,407.2 79.2,406.9 77.4,404.4ZM48.2,390.1 51.1,390.1 51.1,390.8 48.2,390.8ZM110.1,456.0 113.7,457.9 119.0,461.7 120.8,464.4 119.0,464.4 114.7,462.1 110.8,457.9ZM141.0,513.4 143.9,516.0 146.7,518.2 148.2,522.1 148.9,524.3 150.3,523.0 151.4,523.0 152.4,527.0 154.6,528.6 157.0,529.3 159.9,527.2 161.8,527.9 161.0,531.5 159.5,534.3 156.3,535.2 156.7,536.8 155.3,540.3 152.8,544.0 150.3,545.9 148.2,544.5 149.6,540.7 149.2,538.0 146.4,536.6 145.0,535.2 146.0,533.8 147.8,531.5 148.5,527.0 147.4,524.3 146.4,522.1 143.5,518.2 142.1,516.4 141.0,513.4ZM141.0,540.7 142.1,543.1 143.2,544.0 146.0,543.1 146.7,546.4 144.6,549.8 142.8,552.7 141.4,555.1 142.5,556.6 139.6,557.1 136.1,559.6 135.4,563.1 133.9,567.1 130.7,570.2 127.2,570.7 125.4,570.7 122.6,568.7 119.4,568.1 120.4,563.6 123.6,560.0 127.2,557.6 131.4,554.1 135.7,549.8 136.8,546.6 138.9,542.2 141.0,540.7ZM122.6,571.7 125.0,572.0 124.7,573.8 122.6,573.8ZM178.0,556.3 180.5,556.3 180.2,558.1 178.7,557.6ZM14.1,-32.8 24.8,-44.3 39.0,-41.3 60.3,-32.8 53.2,-27.3 35.4,-28.7 17.7,-26.0ZM24.8,-9.1 37.2,-11.6 35.4,-6.7 24.8,-6.7ZM44.3,208.9 47.2,206.0 46.5,206.0 44.0,207.9ZM49.7,204.5 56.1,200.9 55.7,202.4 50.0,205.5ZM58.6,199.9 62.1,197.3 61.4,198.9 58.9,200.4ZM67.4,193.2 68.9,191.6 68.5,193.2 67.4,194.0ZM77.0,180.4 79.9,175.4 81.7,172.6 82.4,173.8 80.6,177.1 77.8,180.9ZM83.4,406.9 87.0,409.0 85.9,409.4 83.4,407.6ZM90.2,410.1 95.2,413.0 94.5,413.7 90.6,411.2ZM94.5,416.2 98.7,418.0 97.3,418.4 94.5,417.1ZM98.0,413.0 100.2,416.6 99.4,416.9 98.0,414.4ZM100.5,419.8 104.1,421.3 103.7,421.8 100.5,420.5ZM85.2,411.5 88.1,413.3 87.4,414.1 85.2,412.6ZM119.4,435.8 121.5,437.3 121.1,439.2 119.4,438.4ZM121.8,440.6 123.6,442.1 122.6,442.9 121.5,441.4ZM125.0,446.6 126.1,447.0 125.4,447.5ZM127.9,450.7 129.0,451.1 128.6,451.8ZM124.3,438.4 125.0,440.3 124.7,440.6 124.3,439.9ZM157.4,446.6 160.6,445.8 162.4,447.7 159.9,449.0 157.4,448.5ZM162.4,442.9 166.6,441.4 166.6,442.9 163.4,444.2ZM192.6,431.5 194.7,431.5 194.4,432.5 192.6,432.4ZM195.1,432.7 197.6,433.1 197.2,433.5 195.4,433.3ZM275.1,446.2 276.5,446.4 276.5,447.5 275.1,447.1ZM481.3,384.1 483.4,382.6 484.2,385.8 482.0,386.6ZM484.9,384.8 486.3,384.8 485.9,385.7Z"/></clipPath></defs>
<rect width="936" height="625" fill="#61cfe5"/>
<path d="M209.3,71.0 216.8,65.8 224.6,66.7 231.7,64.9 225.0,57.7 213.9,46.5 216.1,40.6 227.4,33.6 231.4,26.3 241.7,21.0 250.6,15.5 259.4,19.9 268.3,24.2 279.0,26.3 291.4,29.5 305.7,33.6 314.6,38.6 323.4,40.6 330.6,34.6 341.2,30.5 350.1,24.2 355.4,29.5 362.6,33.6 364.3,29.5 375.0,31.5 391.0,40.6 398.1,50.3 408.8,52.2 415.9,50.3 423.0,56.8 424.8,62.2 428.3,55.9 424.8,49.3 431.9,44.5 444.3,51.2 456.8,51.2 463.9,55.9 467.4,47.4 472.8,43.6 465.7,34.6 464.6,24.2 469.2,8.7 476.3,15.5 479.9,29.5 483.4,34.6 487.0,43.6 494.1,47.4 495.9,55.9 501.2,53.1 503.0,41.6 504.8,31.5 513.7,32.6 517.9,43.6 515.4,54.0 517.9,57.7 510.1,64.9 501.2,64.0 501.2,67.5 495.9,73.6 494.1,82.7 487.0,85.2 483.4,88.4 478.1,93.9 474.6,101.5 471.0,109.0 470.3,118.2 472.1,123.1 477.0,129.2 478.1,135.1 485.2,133.8 494.1,139.0 503.0,144.7 514.4,146.6 514.7,157.0 517.2,164.1 520.8,169.2 525.0,169.8 526.8,162.9 526.1,154.0 523.6,149.7 531.4,144.7 535.0,137.1 533.2,129.9 527.9,123.1 531.4,116.1 530.4,107.5 529.0,97.0 538.6,97.8 545.0,96.2 552.8,103.8 559.2,107.5 559.9,116.1 558.1,123.1 563.8,127.2 570.6,123.1 574.8,116.1 577.7,111.8 581.2,121.7 586.6,131.9 589.0,140.3 593.7,146.0 600.8,149.1 603.6,155.8 608.6,162.3 607.9,167.5 602.6,169.2 597.2,174.3 590.1,176.0 579.4,175.4 570.6,176.0 567.0,180.4 561.7,185.3 557.4,191.6 553.8,194.3 558.8,190.1 565.2,184.7 572.3,181.5 578.4,182.6 578.4,185.3 572.3,187.4 575.9,189.5 576.6,193.2 577.7,197.3 581.2,198.9 587.3,199.9 590.1,194.3 592.2,193.2 594.4,198.4 590.1,201.9 581.2,205.5 574.1,210.9 571.6,209.4 573.0,205.5 577.7,201.4 572.3,202.4 568.8,204.5 563.4,206.9 557.4,210.4 555.6,214.8 554.9,216.7 557.0,218.6 558.1,219.6 553.8,220.5 549.2,221.7 545.0,223.1 551.0,223.4 543.9,225.0 543.5,229.0 540.7,232.4 538.6,230.4 540.0,234.5 537.8,239.4 536.8,241.4 535.4,235.8 534.6,240.3 537.1,243.0 538.6,248.9 535.0,251.5 530.0,254.7 525.4,257.7 522.6,260.1 519.0,262.8 517.6,269.0 518.3,272.7 520.6,277.6 522.4,284.0 522.0,288.4 520.4,290.6 518.6,290.6 516.2,286.8 514.4,283.6 513.0,280.0 513.0,275.6 510.8,272.7 508.3,270.7 503.7,272.3 500.2,269.5 495.9,269.9 492.3,269.9 488.4,270.3 489.1,274.4 485.2,274.6 480.6,272.9 474.6,272.1 469.9,274.0 464.6,277.6 461.0,280.8 461.4,287.6 459.6,295.1 459.3,302.0 461.4,308.1 465.0,313.4 469.2,315.5 471.4,317.4 477.4,315.7 482.4,314.9 484.9,311.2 485.6,306.6 492.3,304.5 497.7,304.5 498.4,306.6 495.9,311.5 494.8,316.4 493.0,319.4 492.0,324.6 493.8,326.3 497.7,325.9 503.0,325.5 508.3,326.1 511.2,329.0 510.1,336.4 509.4,342.9 511.9,347.3 515.1,350.5 519.0,351.4 522.9,349.4 526.1,348.9 530.7,351.6 532.2,352.7 531.4,356.6 528.6,354.5 527.9,350.9 524.3,351.0 521.5,353.7 522.6,356.4 519.4,357.2 516.5,354.8 512.2,353.7 509.4,352.7 506.2,348.7 504.4,348.3 501.9,346.5 502.3,343.3 498.4,339.3 495.5,336.4 490.6,335.1 483.4,333.1 478.8,330.7 472.8,325.0 469.2,324.6 463.9,326.5 458.6,324.6 451.8,322.2 444.3,318.1 437.2,314.2 431.5,308.9 432.6,304.7 428.7,298.2 423.0,291.1 418.0,288.0 417.0,284.0 412.3,279.2 407.0,273.1 404.9,266.6 398.8,263.6 399.2,267.8 403.1,274.8 407.0,280.8 410.9,286.8 413.4,292.3 415.2,294.3 417.7,297.8 416.2,299.3 414.5,296.6 408.8,292.7 407.7,287.2 403.4,284.2 398.1,280.0 401.3,276.8 395.3,270.7 392.1,263.6 390.3,259.9 386.0,255.2 382.8,253.5 378.2,252.2 373.6,243.0 371.4,237.6 366.8,229.9 364.7,225.7 365.8,218.2 364.3,214.1 366.1,206.0 366.1,197.3 363.6,185.8 369.0,186.9 371.4,191.1 371.8,185.8 369.0,180.9 364.3,178.2 367.9,185.8 360.8,183.1 356.9,179.3 351.2,173.8 353.7,170.9 351.9,164.1 348.3,157.6 343.7,152.2 341.2,146.6 335.9,144.7 333.0,149.1 328.4,139.7 324.9,133.2 321.3,126.8 316.3,122.4 310.3,117.5 302.1,114.4 295.0,114.4 288.6,111.1 284.3,107.5 279.7,111.8 280.1,115.1 274.7,116.8 267.3,120.3 268.7,111.8 274.4,106.0 269.4,107.5 265.8,111.8 261.6,118.2 258.7,125.8 252.3,132.5 243.8,140.9 235.6,146.0 227.4,149.7 221.4,150.3 229.9,142.9 237.0,140.3 244.2,132.5 247.7,123.8 242.4,123.8 236.7,123.1 231.0,124.5 231.7,118.2 229.2,114.0 222.8,111.8 218.9,104.5 219.6,96.2 222.1,91.6 229.9,88.4 234.9,85.2 234.6,79.4 228.2,81.1 218.9,80.3 214.6,78.6 209.3,71.0ZM588.3,62.2 584.8,55.9 577.7,50.3 570.6,44.5 565.2,33.6 568.8,29.5 559.9,22.1 552.8,16.6 543.9,9.9 535.0,0.6 526.1,-10.4 519.0,-14.2 504.8,-11.6 492.3,-7.9 487.0,5.3 490.6,18.8 494.1,25.3 501.2,26.3 505.5,28.9 515.4,29.5 522.6,32.6 527.9,28.4 533.2,34.6 538.6,39.6 545.7,47.4 547.4,58.6 545.7,65.8 542.8,71.9 531.4,73.6 529.7,81.1 536.8,81.9 542.1,79.4 551.0,86.4 556.3,93.9 565.2,98.5 572.3,100.8 575.9,100.0 569.5,93.1 563.4,86.8 570.6,90.8 577.0,96.2 577.3,89.2 573.4,80.3 567.0,71.0 565.2,65.8 570.6,68.4 575.9,71.9 581.2,76.9 586.6,69.3 588.3,62.2ZM391.0,39.6 396.3,40.6 403.4,44.5 415.9,43.6 423.0,42.6 433.7,39.6 446.1,32.6 447.9,18.8 439.0,4.1 433.7,-4.2 423.0,-7.9 412.3,-3.0 401.7,-6.7 391.0,-1.8 385.7,5.3 383.9,13.3 389.2,23.1 401.7,27.4 408.8,26.3 401.7,30.5 391.0,31.5 394.6,36.6 391.0,39.6ZM369.7,16.6 378.6,14.4 383.9,5.3 394.6,-4.2 398.1,-11.6 389.2,-19.3 376.8,-23.3 364.3,-19.3 360.8,-4.2 360.8,7.6 366.1,13.3 369.7,16.6ZM453.2,39.6 460.3,43.6 467.4,40.6 465.7,33.6 458.6,30.5 453.2,33.6 453.2,39.6ZM444.3,7.6 451.4,9.9 460.3,11.0 463.9,0.6 462.1,-14.2 451.4,-16.7 444.3,-6.7 444.3,7.6ZM467.4,7.6 474.6,6.4 479.9,-1.8 485.2,-14.2 476.3,-19.3 467.4,-12.9 467.4,7.6ZM497.7,74.4 503.0,68.4 508.3,69.3 515.4,77.8 521.8,86.0 517.2,88.4 511.9,85.2 510.1,93.1 503.0,90.8 497.7,86.0 500.5,81.9 497.7,74.4ZM511.9,94.7 517.2,93.1 522.6,95.4 515.4,98.5 511.9,94.7ZM521.5,97.8 525.0,98.5 524.0,103.0 521.1,101.5ZM596.2,190.1 597.2,185.8 600.1,180.9 602.9,173.8 607.9,168.1 609.7,168.7 607.2,175.4 605.0,178.2 608.6,177.7 611.4,180.4 616.4,180.4 616.1,184.7 618.6,185.3 619.6,190.6 618.2,195.0 615.7,193.2 614.3,193.7 610.7,193.7 608.2,193.5 608.6,190.6 602.6,190.1 596.2,190.1ZM577.7,177.7 584.8,179.3 587.6,181.5 581.2,180.9 577.7,177.7ZM578.4,194.3 583.0,196.3 586.6,196.1 584.4,198.4 580.2,197.3 578.4,194.3ZM334.1,153.4 338.4,154.0 340.5,164.1 337.0,161.1 334.1,153.4ZM257.7,131.9 263.0,128.5 265.8,131.9 261.2,135.8 257.7,131.9ZM196.5,86.8 206.1,90.0 206.8,91.6 197.2,90.0 196.5,86.8ZM212.2,113.3 217.8,112.6 217.5,116.1 212.5,115.4ZM220.7,149.1 226.7,147.9 225.7,150.9 220.7,151.6ZM210.4,156.4 216.1,154.0 215.7,156.4 210.4,158.2ZM206.1,158.8 209.7,157.0 209.7,158.8 206.1,160.6ZM650.6,115.8 645.2,112.6 641.7,109.0 635.3,108.2 631.7,101.5 629.2,96.2 626.4,88.4 622.8,82.7 621.0,73.6 617.1,64.9 615.7,56.8 617.5,47.4 623.9,43.6 626.4,33.6 620.3,35.6 612.9,33.6 612.2,26.3 620.3,25.3 612.9,21.0 616.8,14.4 609.7,12.2 611.4,0.6 607.9,-11.6 604.3,-23.3 664.8,-44.3 735.9,-30.1 730.6,-16.7 727.0,-6.7 719.9,1.8 728.8,5.3 725.9,13.3 729.5,23.1 719.9,18.8 711.0,24.2 718.1,27.4 727.0,28.4 721.7,34.6 712.8,42.6 702.1,46.5 691.4,52.2 686.1,60.4 679.0,67.5 672.6,70.1 665.5,72.7 663.7,80.3 661.9,88.4 657.7,93.9 655.9,102.3 654.1,110.4 650.6,115.8ZM726.3,85.6 732.3,86.4 735.9,88.0 740.5,89.2 746.6,86.0 751.9,82.7 755.4,80.3 758.6,75.3 755.1,68.4 751.9,65.3 749.0,63.1 744.8,66.7 741.2,65.8 737.7,69.3 734.8,66.7 731.3,71.9 730.6,67.5 727.0,63.6 723.4,65.8 721.3,69.3 719.9,71.9 727.0,71.9 728.1,75.3 721.7,76.9 728.1,80.3 729.1,82.7 726.3,85.6ZM505.1,303.2 508.3,300.1 511.9,298.9 514.4,298.2 520.8,298.5 525.0,300.5 531.4,303.2 535.0,305.5 538.2,307.6 543.2,309.5 540.3,310.8 530.7,311.0 532.5,308.1 528.6,306.6 526.1,304.3 520.8,302.8 515.4,301.1 512.6,302.0 509.8,302.0 505.1,303.2ZM546.0,310.8 552.1,311.0 558.5,311.7 561.0,313.4 563.8,315.7 561.7,316.8 557.4,316.8 552.8,319.2 549.2,317.4 542.5,316.6 543.2,315.5 548.9,315.7 548.2,312.7 546.0,310.8ZM528.4,316.6 532.2,316.0 536.1,317.5 533.9,318.5 530.4,318.5 528.4,316.6ZM568.1,316.0 573.8,316.4 573.4,317.9 568.1,318.1ZM586.9,344.7 590.5,344.4 590.1,346.9 586.9,347.1ZM186.6,164.1 193.7,163.5 193.7,165.2 186.6,165.2ZM174.8,166.4 181.2,165.8 181.2,167.5 174.8,167.5ZM142.1,160.6 145.7,160.6 145.7,161.7 142.1,161.7ZM157.4,165.8 164.2,168.7 164.2,169.8 157.4,167.0ZM528.6,290.4 530.4,290.8 530.7,294.3 528.6,293.5ZM531.8,284.8 533.2,285.2 532.9,287.6 531.8,287.2ZM526.5,284.4 530.0,284.2 530.0,285.0 526.5,285.2ZM533.9,289.6 536.1,291.9 536.4,291.5 534.6,289.2ZM538.9,293.1 539.3,294.7 538.6,294.7ZM545.0,306.2 547.4,306.2 547.1,307.0 545.0,307.0ZM252.2,311.2 253.0,309.5 255.9,311.3 253.8,314.4 252.5,313.8ZM249.8,306.8 251.6,306.8 252.3,307.9 250.6,308.1ZM244.3,304.5 246.3,304.9 245.9,305.7 244.9,305.5ZM239.0,302.2 240.6,302.0 240.4,303.2 239.2,303.0ZM931.3,273.1 930.7,276.8 932.2,279.2 934.3,282.4 936.4,286.4 939.3,291.5 942.5,295.1 945.7,300.9 946.4,305.5 967.0,306.6 967.0,264.9 932.2,264.9ZM530.0,357.3 532.2,352.3 533.9,354.5 535.7,350.9 538.2,348.7 538.6,345.5 541.0,343.3 543.2,342.6 547.4,342.2 552.1,338.4 554.2,339.3 553.5,341.1 551.4,342.9 552.4,344.4 553.8,343.6 557.4,341.8 558.1,339.3 559.2,341.8 563.4,343.3 565.2,345.5 572.3,345.1 575.9,346.9 578.4,345.5 583.0,344.7 586.9,344.7 584.1,346.5 588.3,348.3 590.8,350.1 593.7,352.7 599.0,358.0 602.6,361.3 604.3,362.0 611.4,361.8 615.0,362.3 620.3,365.2 623.2,367.3 625.3,368.8 627.4,375.9 629.6,379.1 628.9,382.6 632.8,383.0 634.9,384.1 636.3,385.8 641.7,386.9 647.0,388.7 649.5,391.9 653.0,391.5 657.7,393.0 664.8,393.1 670.1,396.2 674.7,400.1 681.1,401.5 682.2,404.4 683.3,408.3 682.9,411.9 681.5,415.9 679.4,418.4 675.4,422.4 672.6,426.7 670.1,429.6 668.3,435.1 668.3,440.6 667.6,447.0 665.8,453.7 663.7,456.7 661.2,462.5 657.7,466.9 653.4,467.1 648.1,468.2 642.4,470.9 636.7,475.6 634.2,480.0 634.2,484.8 633.1,489.2 629.2,494.9 625.7,500.7 621.8,504.0 617.1,510.4 615.0,513.8 611.4,515.8 607.2,515.6 601.5,513.4 599.4,511.7 599.4,514.3 603.6,517.7 603.3,521.2 605.4,522.1 602.6,529.3 597.2,532.4 590.1,533.8 585.8,533.4 585.8,540.7 583.0,543.8 575.9,542.2 575.5,546.9 579.4,549.3 580.9,550.7 577.7,552.4 575.5,554.1 574.8,560.5 570.6,563.6 567.0,567.6 569.5,572.8 573.0,577.0 568.8,582.3 566.3,585.6 563.1,590.0 561.3,595.1 562.0,598.5 563.8,602.2 560.2,602.5 555.3,604.9 559.9,603.7 563.8,604.3 564.5,607.2 567.0,612.0 570.6,615.1 575.2,616.3 570.6,618.8 567.7,623.8 561.7,621.3 556.3,619.4 551.0,615.1 546.4,608.4 542.1,601.9 539.6,594.5 538.9,586.1 538.6,578.1 538.6,571.7 542.1,568.7 543.9,562.6 546.4,557.6 547.4,550.2 548.2,545.9 545.0,546.9 543.2,553.6 542.8,547.8 544.6,543.1 545.7,538.4 546.4,535.2 545.3,527.0 547.1,523.9 548.9,518.2 551.7,511.7 552.4,507.4 552.8,501.1 553.1,494.9 553.5,490.8 554.9,482.8 556.0,476.4 556.7,469.4 557.6,461.3 557.6,456.4 557.0,450.0 553.5,446.6 548.5,443.2 543.9,440.6 539.6,438.2 535.7,432.9 533.9,428.2 532.5,426.0 530.4,421.3 527.5,415.5 525.8,411.9 522.9,407.6 518.5,404.4 517.9,399.7 521.1,395.5 522.9,392.2 519.2,391.0 519.7,386.6 522.2,383.0 522.6,380.2 524.3,379.1 526.8,377.3 528.2,373.8 531.4,373.4 532.9,369.1 531.4,363.4 531.8,359.5 530.0,357.3ZM563.1,604.3 557.0,606.0 556.7,610.8 551.0,613.8 554.6,617.5 563.4,619.4 570.6,618.1 575.2,616.0 570.6,614.4 566.6,611.4 564.5,607.2 563.1,604.3ZM786.0,246.5 788.2,246.1 791.7,249.1 796.3,248.7 799.9,249.6 804.9,246.7 810.6,243.7 817.7,241.9 825.1,242.1 829.4,241.0 834.7,241.7 838.3,241.2 842.2,239.9 843.6,242.1 846.1,241.0 844.3,243.9 844.7,246.5 846.3,249.1 845.0,251.7 842.9,254.7 845.8,256.5 848.2,258.2 853.9,259.0 860.7,261.1 862.5,264.9 869.2,267.4 874.6,269.9 878.1,267.4 878.5,262.4 883.4,259.0 888.8,260.1 892.3,262.6 895.9,264.5 903.7,265.3 910.1,267.6 913.3,266.1 917.2,264.7 921.8,265.7 928.6,265.7 931.1,273.1 929.3,279.2 926.5,278.4 922.9,271.5 922.2,272.7 925.4,279.2 927.9,284.0 930.4,290.4 933.6,295.4 938.2,302.8 939.6,306.6 967.0,306.6 967.0,474.9 951.4,437.0 949.2,441.8 943.9,445.5 938.2,447.9 933.2,453.0 930.7,455.0 932.5,461.3 933.2,470.2 932.2,473.3 924.3,476.4 922.9,478.8 924.0,482.8 922.2,489.2 917.2,494.5 913.7,500.3 908.3,505.7 906.2,507.6 898.4,511.7 892.3,512.1 885.9,512.1 878.1,515.1 874.2,513.4 872.6,513.2 872.2,511.3 870.6,506.4 872.1,501.9 868.5,494.9 865.7,489.2 861.0,481.2 860.0,474.9 858.6,467.1 854.6,458.6 850.7,450.0 848.8,445.3 849.0,440.6 850.4,437.7 851.4,431.5 854.6,428.2 856.1,422.4 853.9,414.4 852.9,409.0 850.7,404.7 850.4,402.6 849.1,400.1 846.1,396.9 841.1,391.5 840.1,388.3 838.1,385.5 840.4,381.6 841.1,379.1 841.8,374.8 842.2,372.3 841.3,368.9 839.0,368.8 837.2,366.6 831.9,367.3 828.3,367.7 825.1,363.4 823.0,360.6 819.1,360.2 815.5,360.4 811.3,361.3 806.3,363.2 799.5,366.1 796.0,364.8 792.8,364.3 785.7,365.9 780.0,367.5 775.0,365.2 768.6,360.6 766.1,358.4 762.6,356.6 760.1,352.7 758.3,349.1 754.7,345.1 751.5,340.4 747.6,338.9 748.0,334.5 744.8,330.2 748.3,325.4 750.1,317.5 748.3,312.7 746.4,307.0 746.9,303.5 750.5,296.2 755.4,286.8 759.4,282.8 761.1,279.6 766.1,276.8 770.7,273.6 772.9,269.5 772.2,264.9 774.3,261.1 776.8,257.3 780.0,256.0 782.8,254.1 785.0,249.1 786.0,246.5ZM788.2,245.2 784.6,243.4 782.1,240.3 778.9,241.2 775.0,241.2 775.7,236.7 773.4,233.6 775.4,226.7 776.1,222.0 775.5,217.7 773.9,213.8 777.1,211.4 778.9,209.4 783.9,210.4 786.7,210.4 793.5,210.9 796.3,211.4 800.6,211.4 801.7,210.9 802.7,205.0 803.1,200.4 802.7,197.3 799.5,193.2 798.5,191.6 796.3,190.1 791.4,189.0 789.9,185.8 792.8,184.2 796.3,183.4 799.9,184.7 801.7,184.5 801.3,181.5 800.2,178.8 802.4,178.8 803.1,180.4 805.9,180.9 807.4,179.9 810.9,177.7 812.7,174.3 813.8,171.5 815.5,171.2 817.3,170.1 819.8,169.2 821.6,165.8 823.7,160.6 826.6,157.6 831.5,157.6 835.4,156.1 837.9,154.6 838.6,152.2 837.6,148.5 836.5,144.7 835.8,138.4 836.2,135.1 837.6,134.5 840.8,133.8 844.7,130.2 844.3,132.5 843.6,137.7 845.8,139.0 843.3,140.6 841.8,144.7 840.8,147.9 841.8,149.1 843.3,151.6 846.1,151.6 845.8,154.0 847.9,154.0 850.0,152.8 851.4,150.9 855.4,150.0 856.1,153.4 857.8,154.6 863.9,152.2 867.4,149.7 872.1,148.8 873.5,151.6 876.7,151.2 878.1,149.1 881.7,146.0 882.0,143.5 881.7,136.4 883.4,131.9 887.4,130.2 889.5,134.5 892.3,135.1 893.8,129.9 894.1,125.8 890.6,124.5 890.6,120.3 894.8,118.2 899.4,117.5 906.6,118.2 910.1,114.7 914.4,115.1 909.0,109.7 903.0,111.1 895.9,113.3 888.8,115.8 885.9,111.8 882.7,107.5 883.4,103.8 882.4,96.2 883.4,91.6 887.0,86.8 890.6,82.7 894.1,77.8 897.3,76.1 894.1,70.1 892.7,69.3 885.9,71.0 883.4,76.1 881.7,78.6 879.2,86.0 874.6,90.8 871.0,95.4 868.5,97.0 868.5,102.3 868.2,109.7 872.8,113.3 874.2,116.1 871.4,119.6 870.6,123.1 865.7,124.5 866.4,130.5 865.3,137.1 863.9,140.3 862.5,140.3 859.3,141.6 857.8,144.7 856.1,145.4 852.5,145.4 853.2,144.1 852.2,141.6 851.4,139.7 852.9,137.7 850.7,135.1 849.3,130.5 846.8,125.8 846.5,121.7 845.0,115.4 844.0,119.6 842.6,121.7 840.8,123.1 835.4,127.9 832.1,128.5 827.3,124.5 827.3,121.7 825.5,118.9 825.8,111.8 824.4,107.5 824.8,100.8 825.1,98.5 829.0,96.2 833.7,92.3 838.3,88.4 841.5,86.8 844.3,81.9 846.8,76.9 849.7,71.9 851.8,67.5 853.9,63.1 853.2,58.6 858.2,55.9 860.3,49.3 855.0,48.4 858.6,43.6 865.7,43.6 862.1,39.6 869.2,36.6 874.6,31.5 879.9,28.4 885.2,26.3 891.3,22.1 898.7,17.2 904.8,17.7 908.3,21.0 908.3,24.7 913.7,23.1 917.6,25.8 910.1,28.9 913.7,32.6 919.0,31.5 924.3,34.6 924.7,39.1 931.4,37.6 938.6,40.6 952.8,51.2 953.8,63.1 949.2,66.7 943.9,66.7 935.0,64.0 926.1,60.9 922.6,57.7 927.9,65.8 931.4,81.1 938.6,85.2 942.1,81.9 947.4,79.4 967.0,84.4 967.0,267.0 928.6,265.7 930.4,262.8 931.3,259.4 933.2,254.7 934.3,247.8 935.7,243.0 933.2,243.0 930.0,242.1 926.8,245.0 923.6,245.4 919.0,242.5 916.2,241.7 915.4,244.3 910.5,242.5 907.6,242.1 904.4,241.2 903.7,237.2 902.3,234.9 900.5,235.4 902.3,230.8 899.8,229.9 900.2,227.6 900.2,226.2 899.4,224.8 899.1,223.6 893.8,223.4 892.3,227.1 889.8,226.7 888.4,224.8 887.4,227.6 888.8,230.8 890.2,234.5 892.3,235.8 892.3,238.3 891.3,237.2 888.8,237.2 889.5,239.4 889.1,243.4 887.0,243.9 885.6,241.2 884.2,242.1 882.7,238.1 884.2,235.4 881.7,234.9 880.6,232.6 878.8,229.9 876.0,225.7 876.0,221.5 876.0,218.6 872.8,216.2 871.4,215.0 865.3,210.9 861.0,207.9 860.0,203.4 858.2,201.9 856.4,204.5 855.4,200.9 856.1,200.2 850.7,201.4 851.4,204.0 850.7,206.9 851.8,207.9 855.0,210.4 857.5,215.8 861.0,218.4 864.6,218.6 863.5,220.5 867.1,222.4 871.0,224.8 872.8,227.1 872.2,228.5 871.0,227.6 868.2,225.3 866.0,227.6 867.8,232.2 866.0,233.1 864.2,237.0 862.6,236.3 863.5,233.6 864.2,231.3 862.5,227.3 859.6,224.5 857.5,223.8 855.0,222.0 850.4,219.4 849.0,217.7 846.5,216.2 844.3,213.6 843.6,210.6 841.8,207.9 838.6,206.4 836.2,208.4 833.0,209.9 830.5,212.4 828.0,212.8 825.8,211.9 823.4,211.4 820.9,210.9 818.0,212.8 817.8,215.3 818.7,216.7 814.8,221.0 811.3,222.4 809.8,224.3 807.0,227.6 805.9,229.9 807.7,233.6 805.2,235.4 803.8,238.5 799.2,242.5 791.4,242.5 788.2,245.2ZM786.7,176.8 789.2,174.6 791.0,171.5 792.1,170.4 796.3,170.4 797.4,168.7 795.6,169.0 792.8,168.1 788.9,167.5 788.2,166.4 792.4,162.9 792.4,160.6 790.3,161.1 791.7,159.4 790.6,158.2 794.6,158.2 796.0,157.3 796.3,154.6 796.7,153.4 794.2,150.9 796.0,148.2 792.8,149.1 789.6,150.0 788.9,147.9 790.3,144.7 789.6,142.2 786.4,146.0 787.1,141.6 787.4,139.0 785.0,137.1 786.4,135.1 784.2,132.5 786.4,131.2 787.4,128.5 788.9,126.5 789.2,124.5 792.8,124.8 794.9,124.1 796.3,124.1 796.0,125.8 792.8,129.2 792.1,131.9 795.3,130.5 799.9,130.5 800.6,131.9 799.5,134.2 798.1,137.7 797.8,139.7 795.6,141.6 797.8,141.3 799.9,142.9 801.3,144.7 802.0,147.9 802.7,150.0 804.9,150.9 806.6,153.4 806.6,156.4 808.2,159.1 807.7,160.8 808.8,160.3 811.6,160.6 813.2,162.9 812.7,165.2 811.6,166.4 809.5,168.7 810.6,169.5 812.0,169.2 811.8,170.9 810.4,172.1 807.9,172.9 806.6,172.6 804.2,173.0 802.4,173.8 799.9,173.2 798.3,174.3 796.3,173.2 794.6,174.3 794.0,176.0 792.2,175.2 789.9,176.0 788.5,177.4 786.7,176.8ZM780.7,145.4 785.0,146.6 786.7,149.7 787.6,151.6 785.0,154.0 785.3,157.9 785.7,160.3 784.4,164.6 782.1,164.9 777.5,167.0 772.2,169.0 770.0,165.2 772.5,162.3 773.6,160.0 775.0,158.8 770.7,157.6 771.1,154.0 771.4,152.2 776.4,152.2 777.8,150.3 775.7,149.7 777.5,146.9 780.7,145.4ZM851.3,237.6 852.2,236.1 854.6,235.8 858.6,236.5 862.5,235.5 861.0,239.0 861.4,241.2 860.7,242.8 858.2,241.9 855.4,240.1 852.9,238.5ZM836.2,222.9 839.7,221.7 841.8,225.3 841.1,231.3 839.0,232.2 836.9,232.2 836.9,226.2 836.0,224.3ZM840.4,213.3 841.0,217.7 839.7,221.0 837.6,218.6 837.6,216.2 840.1,214.8ZM890.6,247.4 893.0,247.6 898.4,248.5 900.5,248.7 900.2,250.0 894.8,250.2 890.6,248.9ZM921.8,249.6 924.3,248.5 930.0,247.0 927.9,250.0 924.3,251.7 922.2,251.1ZM815.5,229.4 818.0,227.8 819.3,229.0 817.8,230.8 815.9,230.1ZM846.5,143.5 849.7,140.9 851.8,141.3 851.8,144.1 850.4,146.6 849.0,147.9 846.8,146.6ZM841.8,144.7 845.0,144.4 845.4,147.2 843.3,147.6 842.2,146.6ZM871.4,133.2 873.8,129.2 874.9,129.9 873.5,133.8 871.7,135.8ZM865.3,140.3 867.1,134.5 867.8,132.8 866.4,137.7ZM884.5,126.5 885.9,124.5 889.5,124.5 888.8,126.5 885.9,128.5ZM885.6,122.4 887.4,121.0 888.8,122.4 887.0,123.8ZM780.7,97.8 783.9,97.8 783.5,101.5 781.4,100.8ZM801.3,110.4 803.4,109.7 803.1,115.4 801.7,114.7ZM795.3,121.0 797.8,120.3 797.0,122.4 795.3,122.4ZM781.8,126.5 785.0,125.8 783.9,129.2 781.0,133.8 780.3,131.9ZM745.8,259.2 747.6,259.4 747.3,260.1 745.8,259.9ZM837.2,369.7 838.6,369.8 837.9,371.4 837.0,370.9ZM830.1,381.6 831.0,381.9 830.5,382.8ZM589.4,596.8 594.4,596.2 595.8,600.2 590.8,601.4ZM596.5,596.8 601.5,597.3 599.0,601.9 596.2,600.2ZM746.9,277.8 749.4,277.0 748.7,279.0 747.6,279.2ZM750.8,278.8 752.2,278.6 752.2,280.0 751.2,280.2ZM755.4,278.8 757.6,276.4 757.9,277.6 756.5,278.8ZM757.9,274.4 759.2,274.4 759.0,275.6 757.9,275.6ZM743.0,276.0 743.9,276.0 743.7,277.2ZM715.3,237.2 717.4,237.4 717.0,238.1 715.3,237.9ZM705.7,234.0 707.4,234.5 706.7,234.9 705.7,234.7ZM709.6,233.1 710.6,233.3 710.3,233.8ZM722.4,327.9 723.6,328.3 723.4,329.4 722.6,329.0ZM717.0,321.1 718.3,321.3 717.8,322.0ZM720.2,323.1 721.7,322.9 721.3,323.5ZM725.4,324.6 726.3,324.8 725.9,325.5ZM-28.6,218.2 -7.2,215.8 -0.1,214.8 3.4,212.4 8.8,206.9 12.3,201.9 16.6,195.8 19.4,191.1 25.8,182.6 26.6,176.0 27.6,168.7 29.8,164.1 29.0,158.2 24.8,158.8 23.0,152.8 19.4,155.2 15.2,154.6 14.8,152.2 13.0,154.6 7.7,149.7 13.4,149.7 15.9,141.6 19.1,137.7 26.6,128.5 31.9,121.0 36.2,118.9 46.1,119.6 56.8,116.8 63.2,117.5 68.5,122.4 72.8,120.3 78.1,118.9 76.3,114.7 84.2,105.3 88.8,101.5 97.0,100.8 95.2,105.3 99.4,111.1 106.6,102.3 111.9,95.8 113.0,100.0 107.6,107.5 104.8,113.3 101.2,118.2 95.9,123.1 90.6,127.2 85.2,129.9 81.7,135.1 80.2,144.7 80.6,154.0 81.7,162.9 83.4,170.4 84.2,172.1 87.7,168.1 90.6,162.3 91.3,160.0 95.9,158.2 95.9,152.2 101.9,150.3 103.4,146.6 102.3,141.6 105.8,140.3 107.6,133.2 104.8,129.2 107.6,126.5 110.1,117.5 113.7,114.7 117.9,112.6 122.6,111.8 132.5,115.1 133.2,111.1 140.3,107.5 147.4,101.5 156.3,97.0 164.5,97.8 165.2,93.1 158.1,81.9 158.1,78.2 161.7,79.4 165.2,74.4 167.0,75.7 169.5,72.7 168.8,66.7 172.3,64.9 171.3,70.1 181.2,71.9 184.8,77.8 191.2,81.5 194.4,81.1 195.4,75.3 199.0,71.0 203.6,66.7 199.0,59.5 190.1,57.7 185.5,61.3 184.8,54.9 174.1,45.5 167.0,40.1 156.3,33.6 152.8,31.0 142.1,31.0 133.2,28.4 132.5,33.6 132.9,40.6 127.9,41.6 124.3,32.0 117.2,34.6 110.1,32.6 101.2,34.6 97.7,32.6 92.3,23.1 81.7,17.7 67.4,19.9 60.3,13.3 53.2,5.3 39.0,5.3 27.3,-3.0 23.0,4.1 21.2,13.3 14.1,14.4 7.0,12.2 -0.1,14.4 -10.8,18.8 -17.9,7.6 -28.6,-10.4 -28.6,218.2ZM162.4,17.7 167.0,13.3 174.1,13.3 175.9,16.6 171.6,19.4 165.2,19.9ZM108.3,124.5 111.9,120.3 112.6,122.4 109.4,125.1ZM116.2,146.0 118.3,147.9 117.9,149.7 116.5,147.2ZM31.9,152.2 34.7,152.2 36.5,160.0 36.2,168.7 37.2,177.1 39.7,181.5 41.5,184.2 35.4,181.5 34.0,190.6 37.2,194.3 37.2,197.3 34.4,194.8 31.9,198.4 31.5,194.3 32.2,187.9 31.9,177.1 31.2,165.8 30.8,157.0 31.9,152.2ZM25.8,220.5 24.8,216.2 26.2,211.9 29.8,211.4 30.8,206.0 30.8,201.4 34.4,204.5 40.1,207.9 43.6,206.9 43.6,211.4 45.0,211.6 40.8,213.6 36.5,218.2 31.9,215.8 28.3,215.8 26.2,217.2 28.7,219.1 25.8,220.5ZM29.4,221.0 30.1,225.3 31.9,229.9 30.1,235.4 28.3,236.7 28.0,241.7 26.9,244.8 27.6,247.0 25.5,249.1 24.1,250.0 24.1,247.4 21.9,249.1 20.5,251.3 18.4,251.7 14.1,251.7 13.4,253.0 11.6,256.5 9.8,256.7 7.4,254.7 7.7,251.7 3.4,251.7 -0.1,253.0 -3.7,254.7 -7.2,254.3 -7.2,252.6 -1.9,247.8 3.4,247.6 8.8,247.4 10.6,247.0 13.4,241.7 15.2,239.0 14.1,242.1 19.4,239.4 23.0,234.5 24.8,228.5 24.4,224.8 25.8,222.0 29.4,221.0ZM-1.9,255.6 1.7,253.0 5.6,253.5 5.9,255.2 4.2,257.3 -0.1,259.4 -1.9,258.6ZM-10.8,257.3 -7.2,254.7 -4.0,257.3 -4.7,260.7 -5.8,265.3 -8.3,267.0 -10.1,265.7 -10.1,261.5 -11.8,259.4ZM-28.6,433.3 -21.4,432.5 -16.1,436.2 -11.8,436.6 -12.6,431.5 -9.7,429.3 -7.9,427.4 -5.4,426.7 -1.5,426.3 -1.5,424.2 1.7,425.3 7.0,426.3 10.6,426.0 13.4,426.7 12.3,431.5 10.2,434.0 8.8,437.0 11.6,439.2 15.9,441.0 21.2,444.4 26.6,446.6 28.3,443.6 30.1,437.0 30.5,429.6 31.2,428.2 32.6,422.4 33.7,421.3 35.1,424.2 37.2,428.5 37.9,434.4 40.8,434.0 43.6,438.8 45.4,444.0 46.8,450.0 49.0,452.8 52.2,454.8 55.0,456.4 57.5,459.8 59.6,464.4 63.2,465.5 63.2,468.6 65.0,470.6 68.9,474.1 71.7,474.9 71.4,480.8 71.7,484.4 73.1,489.2 71.7,496.1 70.6,500.7 69.2,504.5 66.7,507.0 65.0,511.3 63.2,516.0 61.0,521.2 60.3,527.0 53.2,528.8 49.7,531.5 47.5,534.3 44.3,532.0 42.2,529.3 40.4,530.6 37.2,533.1 33.7,531.1 30.5,531.1 26.9,529.3 24.1,524.8 23.0,520.4 20.9,518.6 18.4,518.8 19.4,515.6 17.7,512.5 17.0,516.4 14.1,517.1 15.9,511.7 17.3,508.3 17.0,505.3 15.5,508.3 11.6,512.5 10.2,515.1 7.7,513.8 4.2,507.4 4.2,506.6 2.4,503.6 -1.9,503.2 -7.2,501.1 -17.9,503.2 -28.6,507.4 -28.6,433.3ZM41.5,541.7 47.9,543.8 54.3,542.6 54.3,547.8 52.9,553.6 49.0,555.6 46.1,555.1 43.6,550.2 41.5,544.0ZM12.7,519.5 16.2,518.6 18.0,519.7 15.9,520.6 12.7,520.4ZM12.0,432.5 13.8,432.5 13.8,434.2 12.3,434.0ZM-9.7,423.8 -5.4,423.8 -5.8,425.3 -9.4,425.3ZM52.5,537.5 54.3,538.0 54.3,540.3 53.2,539.8ZM38.3,536.6 39.4,536.6 39.4,538.9 38.6,538.9ZM-7.6,385.8 -1.9,384.4 3.8,386.0 4.5,390.1 6.3,394.7 8.8,395.1 12.3,390.8 17.0,388.3 23.0,390.1 27.3,391.9 31.9,393.7 37.6,395.5 40.8,396.5 45.4,400.8 47.9,402.9 51.4,404.4 52.7,406.9 49.7,407.2 51.4,410.1 53.9,412.6 55.4,415.1 58.6,417.3 63.2,419.6 61.4,421.1 55.0,419.5 50.4,416.9 46.1,412.3 41.8,410.5 39.0,410.5 37.2,412.6 35.4,415.9 31.9,415.9 28.3,415.5 23.0,411.9 19.4,413.0 16.6,413.0 19.4,409.0 20.2,407.2 17.7,402.6 14.1,400.4 8.8,398.7 3.4,396.9 -0.8,397.2 -0.8,394.7 2.7,393.7 1.7,391.5 -3.7,393.0 -3.7,390.1 -7.6,385.8ZM54.3,402.9 57.5,402.6 60.3,400.8 61.0,402.6 63.9,400.8 65.7,397.9 68.5,397.9 68.2,400.4 65.7,402.6 62.1,405.1 56.8,405.4 54.3,402.9ZM63.2,392.2 66.0,393.7 69.2,396.2 71.4,399.0 70.3,400.1 67.8,396.9 64.6,394.0 62.8,393.0ZM76.7,402.6 79.5,404.4 81.3,407.2 79.2,406.9 77.4,404.4ZM48.2,390.1 51.1,390.1 51.1,390.8 48.2,390.8ZM110.1,456.0 113.7,457.9 119.0,461.7 120.8,464.4 119.0,464.4 114.7,462.1 110.8,457.9ZM141.0,513.4 143.9,516.0 146.7,518.2 148.2,522.1 148.9,524.3 150.3,523.0 151.4,523.0 152.4,527.0 154.6,528.6 157.0,529.3 159.9,527.2 161.8,527.9 161.0,531.5 159.5,534.3 156.3,535.2 156.7,536.8 155.3,540.3 152.8,544.0 150.3,545.9 148.2,544.5 149.6,540.7 149.2,538.0 146.4,536.6 145.0,535.2 146.0,533.8 147.8,531.5 148.5,527.0 147.4,524.3 146.4,522.1 143.5,518.2 142.1,516.4 141.0,513.4ZM141.0,540.7 142.1,543.1 143.2,544.0 146.0,543.1 146.7,546.4 144.6,549.8 142.8,552.7 141.4,555.1 142.5,556.6 139.6,557.1 136.1,559.6 135.4,563.1 133.9,567.1 130.7,570.2 127.2,570.7 125.4,570.7 122.6,568.7 119.4,568.1 120.4,563.6 123.6,560.0 127.2,557.6 131.4,554.1 135.7,549.8 136.8,546.6 138.9,542.2 141.0,540.7ZM122.6,571.7 125.0,572.0 124.7,573.8 122.6,573.8ZM178.0,556.3 180.5,556.3 180.2,558.1 178.7,557.6ZM14.1,-32.8 24.8,-44.3 39.0,-41.3 60.3,-32.8 53.2,-27.3 35.4,-28.7 17.7,-26.0ZM24.8,-9.1 37.2,-11.6 35.4,-6.7 24.8,-6.7ZM44.3,208.9 47.2,206.0 46.5,206.0 44.0,207.9ZM49.7,204.5 56.1,200.9 55.7,202.4 50.0,205.5ZM58.6,199.9 62.1,197.3 61.4,198.9 58.9,200.4ZM67.4,193.2 68.9,191.6 68.5,193.2 67.4,194.0ZM77.0,180.4 79.9,175.4 81.7,172.6 82.4,173.8 80.6,177.1 77.8,180.9ZM83.4,406.9 87.0,409.0 85.9,409.4 83.4,407.6ZM90.2,410.1 95.2,413.0 94.5,413.7 90.6,411.2ZM94.5,416.2 98.7,418.0 97.3,418.4 94.5,417.1ZM98.0,413.0 100.2,416.6 99.4,416.9 98.0,414.4ZM100.5,419.8 104.1,421.3 103.7,421.8 100.5,420.5ZM85.2,411.5 88.1,413.3 87.4,414.1 85.2,412.6ZM119.4,435.8 121.5,437.3 121.1,439.2 119.4,438.4ZM121.8,440.6 123.6,442.1 122.6,442.9 121.5,441.4ZM125.0,446.6 126.1,447.0 125.4,447.5ZM127.9,450.7 129.0,451.1 128.6,451.8ZM124.3,438.4 125.0,440.3 124.7,440.6 124.3,439.9ZM157.4,446.6 160.6,445.8 162.4,447.7 159.9,449.0 157.4,448.5ZM162.4,442.9 166.6,441.4 166.6,442.9 163.4,444.2ZM192.6,431.5 194.7,431.5 194.4,432.5 192.6,432.4ZM195.1,432.7 197.6,433.1 197.2,433.5 195.4,433.3ZM275.1,446.2 276.5,446.4 276.5,447.5 275.1,447.1ZM481.3,384.1 483.4,382.6 484.2,385.8 482.0,386.6ZM484.9,384.8 486.3,384.8 485.9,385.7Z" fill="#b6ead5"/>
<defs><filter id="bl" x="-5%" y="-5%" width="110%" height="110%"><feGaussianBlur stdDeviation="3.2"/></filter><filter id="bl1" x="-5%" y="-5%" width="110%" height="110%"><feGaussianBlur stdDeviation="1.2"/></filter></defs><g clip-path="url(#landclip)"><g filter="url(#bl)"><path d="M524.3,377.7 531.4,351.6 551.0,342.9 572.3,344.4 590.1,348.0 604.3,360.9 623.9,366.6 631.0,381.2 641.7,386.6 648.8,392.2 643.4,404.4 632.8,416.9 620.3,427.8 604.3,435.1 588.3,436.2 575.9,444.4 563.4,435.5 551.0,431.8 538.6,420.9 530.4,406.5 526.1,396.5 520.4,388.3ZM664.8,437.0 668.3,448.1 661.9,461.3 650.6,468.6 636.3,476.8 634.6,486.8 625.7,497.0 615.0,494.9 609.7,482.8 615.0,470.9 629.2,461.3 643.4,453.7 655.9,444.4ZM431.9,308.5 440.8,314.2 455.0,314.9 461.4,308.5 465.7,314.2 481.7,314.9 485.2,305.8 498.4,305.1 494.1,325.4 511.2,329.0 509.8,345.1 532.2,353.0 530.4,357.3 520.8,357.3 501.9,347.3 495.5,336.4 478.8,330.5 465.7,326.5 451.4,321.6 434.4,312.7ZM467.4,275.2 467.4,256.5 472.8,241.2 487.0,234.5 504.8,229.9 522.6,224.8 536.8,222.9 545.7,222.9 536.8,241.2 538.6,249.1 526.1,257.7 517.6,269.0 521.8,287.2 517.2,290.4 511.9,274.4 503.7,272.3 488.8,270.3 479.9,272.7ZM364.3,225.3 375.0,223.8 377.5,208.4 387.4,198.4 398.1,198.4 403.4,185.3 394.6,168.7 380.3,150.9 362.6,135.1 346.6,121.7 332.3,118.2 325.2,120.3 334.1,135.1 343.0,150.3 351.9,168.7 363.3,184.7 365.4,208.4ZM469.2,185.3 479.9,174.3 501.2,174.3 522.6,177.1 543.9,174.3 565.2,177.1 577.7,181.5 577.7,200.9 568.8,206.0 556.3,213.3 543.9,222.9 526.1,215.3 511.9,217.2 506.6,199.4 494.1,198.4 479.9,195.3ZM837.6,366.6 849.7,359.8 863.9,361.6 885.2,364.5 903.0,365.9 915.4,373.0 913.7,388.3 910.1,399.4 899.4,406.2 885.2,408.0 869.2,408.0 856.8,404.4 849.7,400.8 839.0,388.3 840.1,375.9ZM751.9,341.5 762.6,343.6 771.4,349.1 780.3,354.5 791.0,355.2 801.7,355.9 812.3,356.6 821.2,355.9 831.9,358.0 840.8,360.6 839.7,368.1 828.3,368.1 817.7,360.6 799.9,366.3 780.0,367.7 766.1,359.1 759.4,352.3 753.7,345.1ZM892.3,413.3 913.7,411.5 927.9,416.6 935.0,422.4 942.1,422.4 951.4,436.2 935.0,448.1 924.3,440.6 910.1,438.8 897.7,446.2 887.0,440.6 885.2,426.0ZM773.9,212.4 801.7,210.9 802.7,198.4 789.9,185.8 812.7,173.8 823.0,162.3 837.2,154.0 842.6,147.9 856.8,154.0 874.6,150.9 885.2,144.7 895.9,135.1 908.3,135.1 913.7,154.0 906.6,171.5 894.1,187.9 903.0,202.4 892.3,211.9 881.7,218.2 876.7,220.1 863.9,210.4 856.1,200.4 851.1,207.4 838.3,206.4 831.2,211.4 817.7,212.4 818.4,216.7 800.6,213.3 775.7,219.1ZM846.1,123.1 851.4,103.8 860.3,84.4 874.6,64.0 892.3,62.2 911.9,71.9 917.2,96.2 911.9,111.8 892.3,114.7 883.4,110.4 882.4,93.9 871.0,96.2 868.2,110.4 873.1,117.5 865.3,137.7 853.9,145.4 851.1,139.0ZM-28.6,218.2 -0.1,214.8 19.4,191.1 27.6,168.7 29.0,158.2 15.2,154.6 7.7,149.7 -7.2,147.9 -28.6,141.6ZM21.2,258.6 46.1,258.6 46.1,198.4 36.2,151.6 30.1,151.6 30.5,198.4 21.2,218.2ZM-10.8,384.1 24.8,390.1 46.1,399.0 63.9,397.2 72.8,400.8 63.9,421.6 46.1,415.1 28.3,416.2 15.9,413.7 -1.9,397.9ZM33.0,420.9 39.0,433.3 46.1,451.1 56.8,460.9 63.9,470.9 68.9,474.9 72.1,474.9 73.5,489.6 69.2,505.3 63.2,516.9 60.3,527.5 47.5,534.7 37.2,533.4 27.6,529.7 30.1,522.6 42.6,522.6 51.4,518.2 58.6,505.3 63.2,490.8 62.1,478.8 53.2,467.1 44.3,453.7 39.0,442.5 34.0,431.5ZM40.8,541.2 55.0,541.2 55.0,556.6 42.6,556.6ZM117.2,570.2 138.6,540.3 147.4,544.0 145.7,547.8 135.0,562.6 124.3,571.7ZM140.3,513.0 162.4,527.5 149.9,546.4 144.6,535.2 147.8,528.4ZM504.8,303.5 543.9,310.4 564.2,316.0 564.2,319.4 527.9,318.7 504.8,303.5ZM-0.1,135.1 17.7,128.5 28.3,111.1 53.2,107.5 67.4,112.6 63.2,118.2 35.4,119.6 18.7,138.4 8.8,149.1 -0.1,147.9ZM80.2,165.8 84.2,171.5 90.9,160.0 102.3,141.6 107.3,129.9 106.6,121.7 96.6,121.7 85.2,131.2 80.6,147.9Z" fill="#93e1c0" opacity=".95"/><path d="M305.7,24.2 305.7,43.6 323.4,47.4 341.2,49.3 359.0,52.2 376.8,50.3 389.2,56.8 401.7,69.3 412.3,81.9 426.6,93.9 440.8,105.3 455.0,113.3 467.4,120.3 472.8,124.5 487.0,124.5 504.8,114.7 524.3,116.1 527.9,131.2 540.3,133.8 551.0,131.9 565.2,130.5 574.1,129.9 581.2,137.7 588.3,144.1 600.8,135.1 600.8,-44.3 305.7,-44.3ZM215.0,40.6 227.4,36.6 252.3,36.6 280.8,36.6 305.7,36.6 305.7,50.3 284.3,56.8 259.4,58.6 238.1,55.9 222.1,51.2ZM327.0,74.4 344.8,73.6 357.2,86.0 364.3,101.5 355.4,110.4 344.8,106.0 334.1,90.8ZM216.8,68.4 231.0,70.1 234.6,76.1 223.9,78.6 215.0,76.1ZM95.9,43.6 110.1,35.6 131.4,30.5 152.8,32.6 167.0,41.6 177.7,51.2 191.9,58.6 200.8,64.9 195.4,76.1 184.8,74.4 174.1,62.2 159.9,65.8 145.7,60.4 131.4,65.8 117.2,64.0 106.6,56.8ZM-0.1,7.6 28.3,-10.4 60.3,7.6 88.8,18.8 99.4,30.5 81.7,30.5 60.3,23.1 35.4,15.5 17.7,24.2 -0.1,25.3ZM-0.1,64.9 17.7,60.4 33.7,71.0 46.1,79.4 58.6,92.3 67.4,100.0 60.3,105.3 46.1,97.0 31.9,87.6 17.7,79.4 -0.1,81.1ZM106.6,95.4 124.3,87.6 142.1,90.8 152.8,95.4 138.6,105.3 124.3,110.4 113.7,110.4ZM87.0,160.0 92.3,147.9 97.7,135.1 103.0,125.1 99.4,123.1 92.3,135.1 87.0,147.9 84.5,158.8ZM593.7,121.7 753.7,121.7 753.7,-59.5 593.7,-59.5ZM831.9,118.2 839.0,103.8 849.7,88.4 858.6,67.5 869.2,49.3 881.7,37.6 892.3,33.6 888.8,43.6 874.6,53.1 863.9,71.0 856.1,87.6 846.1,103.0 838.3,117.5ZM725.2,82.7 757.2,82.7 757.2,64.0 721.7,64.0ZM910.1,24.2 935.0,36.6 952.8,54.0 942.1,58.6 924.3,46.5 910.1,35.6Z" fill="#c7d0cb" opacity=".85"/><path d="M728.8,323.1 728.8,277.6 762.6,274.4 774.3,270.3 780.3,264.5 789.2,256.9 799.9,253.9 814.1,251.7 828.3,250.9 837.2,251.7 841.5,254.3 842.6,250.0 849.7,250.0 849.7,247.8 876.3,247.8 876.7,257.7 888.1,257.7 889.5,250.0 927.9,250.0 930.0,262.0 935.0,260.3 967.0,254.3 967.0,336.4 938.6,339.3 924.3,337.8 906.6,337.8 888.8,333.5 871.0,331.3 853.2,330.5 835.4,329.8 817.7,327.9 799.9,326.8 782.1,325.7 764.3,323.9 748.0,323.1ZM835.4,433.3 856.1,436.2 862.1,446.2 874.6,451.8 888.8,453.7 899.4,461.3 903.0,474.9 897.7,488.8 892.3,501.1 881.7,508.3 873.8,509.1 856.8,509.1 835.4,478.8ZM-28.6,446.2 -7.2,444.4 7.0,447.3 21.2,453.7 33.7,459.4 42.6,469.0 49.0,482.8 49.0,499.0 42.6,511.7 33.7,517.3 26.6,515.1 21.9,509.5 18.4,503.2 14.8,507.4 8.8,510.8 5.2,505.7 -28.6,509.5ZM379.3,210.4 391.0,207.4 405.2,210.4 415.9,218.2 424.8,227.6 431.9,241.2 439.0,254.3 446.1,267.0 449.7,277.2 447.9,289.2 444.3,299.7 439.0,299.7 433.7,291.1 426.6,284.0 417.7,279.2 410.6,272.7 403.4,263.6 396.3,259.4 389.9,255.2 386.4,247.4 381.8,239.4 379.6,229.4 377.5,219.1ZM383.9,258.6 399.5,261.1 410.6,279.2 420.9,291.1 421.9,302.8 408.8,304.3 394.6,285.6 385.7,271.1ZM403.4,167.0 423.0,165.8 435.4,182.6 442.6,203.4 442.6,222.9 433.7,227.6 428.3,210.9 417.7,195.8 407.0,183.7ZM504.8,395.8 524.0,399.4 529.7,411.5 538.6,427.8 549.2,437.0 559.9,439.2 568.8,450.0 571.3,463.2 570.6,478.8 567.0,494.9 561.7,509.5 556.3,509.5 543.9,499.0 543.9,448.1 526.1,440.6 515.4,415.1 504.8,404.4ZM558.8,507.4 570.6,497.0 576.6,507.4 578.7,524.8 588.3,531.5 600.8,547.8 593.7,578.1 583.0,606.0 565.9,612.0 551.0,603.7 549.9,578.1 552.4,552.7 554.6,533.8 556.7,520.4ZM783.9,219.1 799.9,218.2 805.9,222.0 804.2,234.0 798.1,239.4 787.4,238.5 782.8,231.3ZM913.7,228.5 927.9,225.7 942.1,226.7 967.0,227.6 967.0,243.0 938.6,243.0 926.1,240.3 915.4,237.6ZM659.4,397.2 673.7,401.5 677.9,411.5 670.1,420.5 659.4,426.0 654.1,415.1 655.9,404.4Z" fill="#f4f0e6"/><path d="M405.2,34.6 430.1,33.6 437.2,16.6 423.0,0.6 401.7,7.6 398.1,23.1ZM366.1,9.9 383.9,7.6 389.2,-9.1 373.2,-16.7 362.6,-4.2ZM447.9,5.3 460.3,7.6 462.1,-9.1 449.7,-11.6ZM469.2,5.3 478.1,2.9 481.7,-11.6 471.0,-14.2ZM494.1,13.3 511.9,13.3 522.6,-1.8 501.2,-7.9 490.6,1.8ZM529.7,24.2 547.4,27.4 551.0,16.6 533.2,7.6ZM501.2,82.7 511.9,77.8 515.4,84.4 508.3,89.2ZM551.0,63.1 565.2,63.1 568.8,49.3 554.6,43.6ZM458.6,41.6 465.7,41.6 465.0,34.6 458.6,33.6ZM536.8,90.8 551.0,92.3 558.1,82.7 543.9,76.1Z" fill="#ece8dc" opacity=".8"/></g><g filter="url(#bl1)"><path d="M641.7,106.0 634.6,100.0 631.7,88.4 629.9,76.1 627.4,62.2 628.2,49.3 629.2,34.6 625.7,27.4 620.3,18.8 615.0,7.6 611.4,-4.2 606.1,-23.3 664.8,-51.7 739.4,-37.0 727.0,-10.4 714.6,1.8 709.2,14.4 703.9,23.1 711.0,33.6 705.7,43.6 693.2,49.3 686.1,58.6 677.2,64.9 668.3,69.3 661.2,77.8 657.7,89.2 653.4,98.5 650.6,107.5 645.9,110.4ZM741.2,83.6 750.8,82.7 751.5,78.6 744.8,76.9 739.4,79.4ZM734.1,79.4 737.7,78.6 737.3,76.5 733.8,76.9ZM261.2,97.0 268.3,89.2 280.8,86.8 289.7,91.6 296.8,100.0 305.7,106.0 314.6,113.3 321.7,120.3 327.0,125.1 330.6,129.9 325.2,128.5 318.1,123.8 311.0,116.8 303.9,114.0 295.0,111.1 286.1,107.5 279.0,105.3 273.7,101.5 268.3,100.0ZM568.8,65.8 575.9,62.2 577.7,55.9 570.6,53.1 565.2,58.6ZM543.9,33.6 552.8,30.5 554.6,23.1 545.7,21.0 538.6,27.4ZM543.9,570.2 547.4,571.7 547.4,595.6 544.6,594.5 543.9,583.4Z" fill="#fbfcfc"/></g></g>
<path d="M910.5,222.0 906.6,218.6 904.8,215.8 906.2,212.4 908.7,211.4 909.0,207.4 912.6,202.4 916.2,195.8 919.0,195.3 921.8,195.8 924.3,197.9 926.5,198.9 922.6,201.4 925.8,205.5 927.9,206.4 932.9,203.4 936.8,201.9 940.3,205.0 945.7,208.4 954.6,218.2 954.6,220.5 949.2,222.9 942.1,222.9 936.1,221.5 931.8,217.9 927.2,218.2 920.8,219.1 920.1,220.8 915.4,222.4 910.5,222.0ZM931.4,197.3 937.1,201.4 940.3,201.4 942.8,197.3 946.4,193.2 942.1,192.7 936.8,194.8 931.4,197.3ZM902.3,225.3 904.8,223.1 909.8,222.9 913.0,224.1 909.4,225.7 904.8,226.0ZM919.7,386.2 921.8,382.3 925.8,381.6 928.6,383.0 928.2,387.3 925.4,391.2 923.6,392.6 920.8,391.5 919.7,388.3ZM911.2,395.1 912.2,399.0 914.4,406.2 917.6,414.1 915.8,413.3 911.9,405.4 910.5,399.0ZM927.5,417.3 929.7,420.5 931.1,426.0 931.4,433.3 929.7,434.0 929.0,427.8 927.9,421.6ZM915.1,379.1 918.6,374.8 918.3,376.2 916.2,379.4ZM934.6,367.0 935.7,370.5 937.1,374.1 935.7,374.1 934.3,369.5ZM856.1,334.9 858.2,334.5 858.9,336.7 856.8,337.5ZM914.4,114.7 917.9,106.0 922.6,106.8 924.3,111.8 919.0,115.4ZM929.0,106.8 931.4,97.0 935.0,100.8 935.0,107.5 931.4,108.2ZM851.1,124.5 854.3,119.6 856.8,121.7 854.3,125.1ZM857.5,129.9 858.9,124.5 860.0,125.1 858.6,129.9ZM903.0,122.4 905.1,121.7 906.2,127.9 904.1,127.2ZM479.5,194.8 485.2,191.6 488.8,187.9 493.0,184.7 499.4,183.9 504.8,188.5 505.8,193.7 503.0,194.8 499.4,195.8 495.9,195.8 493.0,192.7 490.6,194.0 485.2,195.3 479.5,194.8ZM495.5,219.1 494.5,213.3 495.9,206.0 494.1,205.5 497.7,199.9 503.0,198.4 504.4,200.4 502.6,204.5 500.2,208.4 499.4,213.3 500.2,218.2 497.7,219.8 495.5,219.1ZM505.8,198.9 510.1,197.9 516.5,198.4 522.6,201.9 522.6,205.5 517.9,205.5 516.5,211.4 514.0,213.3 513.7,209.4 510.8,208.4 508.7,209.9 510.5,204.0 507.6,200.4 505.8,198.9ZM510.5,219.6 513.7,221.0 519.0,219.1 526.1,214.8 526.1,213.8 520.8,215.3 515.4,216.7 511.9,218.2 510.5,219.6ZM523.3,211.9 526.1,211.9 531.4,211.9 535.7,210.4 535.7,207.9 531.4,208.4 526.1,209.4 523.3,211.9ZM455.7,155.2 459.3,154.6 463.9,165.8 464.2,174.3 462.1,174.9 461.0,168.7 456.8,161.1 455.7,155.2ZM449.7,158.8 451.4,164.6 453.9,170.4 455.7,171.5 453.9,165.8 451.4,160.0ZM391.0,107.5 394.6,97.8 401.7,97.0 408.8,93.9 418.4,93.9 415.9,97.8 410.6,100.8 407.0,105.3 399.9,107.5 391.0,107.5ZM364.3,67.5 369.7,59.5 378.6,58.6 383.9,61.3 387.4,67.5 382.1,71.9 376.8,76.9 371.4,73.6 369.7,69.3 364.3,67.5ZM410.6,123.8 415.9,119.6 423.0,118.2 430.1,119.6 419.4,121.7 410.6,123.8ZM441.5,139.0 444.3,128.5 446.1,129.2 445.8,138.4ZM490.6,179.9 493.0,176.0 494.1,179.3 492.3,180.9ZM501.2,340.0 503.7,341.1 505.5,343.3 503.4,342.9 501.6,341.1ZM558.1,438.4 559.9,439.2 562.4,441.8 561.0,442.1 558.5,440.3ZM551.4,344.0 553.5,344.7 554.6,348.0 552.8,350.5 550.6,348.7 551.4,346.2Z" fill="#61cfe5"/>
<path d="M305.7,33.1 305.7,112.6 312.8,114.0 318.1,122.4 325.2,116.1 332.3,125.8 338.4,137.7 344.8,141.6 344.1,149.1M368.6,182.6 468.7,182.6 469.9,180.9 476.3,184.7 481.7,187.4 488.4,187.9 492.7,186.3 505.5,194.3 506.6,195.8 510.1,198.4 513.7,201.9 515.1,210.4 513.7,215.3 511.5,217.7 513.7,219.6 526.1,214.3 525.8,211.4 527.9,210.4 535.0,208.4 540.3,204.0 541.4,203.4 552.8,203.4 555.3,201.4 557.0,197.3 561.0,190.9 564.5,191.4 565.9,192.9 565.9,199.9 567.4,202.4 568.8,204.5M390.6,260.7 399.2,259.9 398.8,260.7 412.3,265.7 422.3,265.7 422.3,263.6 428.3,263.6 433.7,268.2 435.4,272.3 440.1,275.2 442.6,271.9 446.5,271.9 449.7,277.2 453.2,281.2 454.6,285.6 461.4,287.4M479.2,330.9 479.2,328.3 481.0,325.0 485.6,325.0 485.6,323.9 482.0,320.9 483.4,320.7 483.4,318.7 489.8,318.7 493.0,316.0M489.8,318.7 489.8,325.7 493.4,326.5M489.8,325.7 489.3,331.3 486.6,333.6M489.3,331.3 492.3,333.1 494.8,334.9M496.6,336.4 501.2,333.5 504.8,330.5 511.2,329.0M502.3,343.3 509.4,344.0M512.2,354.1 513.3,348.7M552.1,311.5 551.7,315.7 551.9,317.9M553.5,340.7 549.2,343.3 547.4,350.1 549.6,353.0 549.9,356.6 557.8,358.0 560.2,361.3 567.0,360.9 565.9,367.0 567.7,370.9 568.1,375.2 569.1,378.7M569.1,378.7 568.4,377.0 558.8,377.0 558.8,379.1 561.0,379.4 560.2,386.6 558.3,397.9M558.3,397.9 555.6,396.5 551.0,391.9 546.7,391.2 541.0,383.7 539.3,383.4M539.3,383.4 535.7,381.6 531.4,380.5 526.8,378.0M539.3,383.4 538.2,388.3 534.3,392.2 528.6,395.1 527.2,399.4 524.7,400.8 521.5,398.7 521.5,395.1M558.3,397.9 547.8,401.5 544.2,409.4 547.4,416.6 550.3,418.7 556.0,418.0 556.0,422.4 559.5,422.2M559.5,422.2 562.7,427.8 561.7,435.5 560.2,439.2 561.7,441.4 559.5,445.5 559.9,446.2 556.7,449.4M559.5,422.2 563.1,422.4 574.5,417.7 574.8,424.9 581.2,427.8 587.3,431.5 592.2,432.5 593.0,441.4 599.4,441.8 600.1,445.8 602.2,448.1 601.5,454.8 600.2,456.2M559.9,446.2 562.0,451.8 563.4,459.0 565.6,466.3 568.1,466.3 571.6,462.5 578.4,466.3 584.1,464.0 587.3,454.5 596.9,453.0 600.2,456.2M600.2,456.2 601.1,463.6 609.0,464.8 610.0,470.9 613.9,471.3 612.9,477.2M584.1,464.0 593.7,470.9 602.2,476.8 598.6,483.6 607.9,484.0 612.9,477.2M612.9,477.2 615.7,482.0 608.6,488.0 602.2,495.7 607.9,498.2 613.2,501.5 617.5,506.1 617.1,510.4M602.2,495.7 600.1,505.3 599.4,511.7M565.6,466.3 568.1,470.9 563.8,475.6 563.1,483.6 559.2,489.2 558.1,499.0 556.3,507.4 558.8,513.0 556.3,522.1 554.2,532.9 552.1,543.1 551.7,557.6 553.5,567.6 549.9,580.7 546.7,587.8 549.9,593.4 549.9,600.2 558.1,600.2 563.8,602.5M563.1,604.3 563.1,617.5M569.1,378.7 574.1,380.2 579.4,377.3 579.4,374.1 583.0,369.5 577.3,368.4 583.7,369.8 590.1,367.0 591.2,364.5 588.7,362.0 589.8,359.1 592.6,357.7 593.7,352.7M591.2,364.5 593.7,365.2 594.7,367.3 594.0,374.8 597.6,378.4 603.3,376.1 606.1,376.2 608.2,374.1 612.9,374.8 614.3,375.2 618.9,375.2 623.2,368.4M603.3,376.1 600.8,368.8 603.6,364.5 604.3,361.8M614.3,375.2 613.6,368.8 615.0,362.7M799.2,249.6 801.0,256.5 802.7,262.0 794.6,264.9 787.4,271.9 776.2,276.4 776.2,282.0 789.9,291.1 811.3,306.2 813.4,309.3 818.4,311.2 818.7,314.2 822.1,313.6 827.6,312.3 833.7,307.0 849.7,297.0 842.6,293.1 840.4,286.4 842.2,283.6 840.8,270.3 839.4,262.4 833.7,255.2 836.5,250.0 837.6,241.7M776.2,282.0 776.2,287.2 764.3,287.2 764.3,297.0 760.8,298.9 760.8,305.3 746.6,305.3M789.9,291.1 783.9,291.1 787.1,323.5 788.2,327.2 773.9,327.2 769.0,327.6 766.1,326.8 763.6,329.8 759.0,325.0 755.4,323.1 749.0,323.5M840.8,270.3 843.6,267.4 843.6,263.6 847.9,260.7 847.9,257.9M849.7,297.0 857.5,300.5 860.3,298.9 863.9,297.2 892.3,312.3 892.3,310.4 895.9,310.4 895.9,302.8 895.5,274.4 895.9,264.5M895.9,302.8 938.2,302.8M860.3,298.9 862.1,306.6 862.5,310.8 862.1,322.0 855.4,330.9 855.0,333.8 849.7,336.0 840.8,337.1 831.9,336.4 821.6,334.5 819.8,341.1M822.1,313.6 822.1,322.4 819.4,327.6 810.6,329.4 807.7,329.4 810.6,334.9 814.8,338.6 815.5,340.4 819.8,341.1 817.0,350.9 816.6,360.2M807.7,329.4 799.9,332.0 794.9,335.3 791.4,337.5 788.2,340.7 787.4,345.8 778.6,346.5 776.4,341.8 766.5,338.6 763.6,329.8M766.5,338.6 758.3,337.7 747.6,338.7M892.3,312.3 892.3,326.5 888.4,327.2 885.9,335.3 888.4,342.2 888.4,344.0 884.2,345.1 874.6,350.9 873.1,354.5 862.1,356.3 857.5,347.3 860.7,344.0 858.9,337.5 857.1,336.0 853.9,347.3 849.0,358.0 844.7,358.0 841.8,358.8 837.6,365.9M888.4,344.0 892.3,351.9 896.6,346.2 906.6,349.4 913.7,346.5 922.2,340.0 925.0,346.5 928.2,349.1 929.0,345.1 931.8,340.7 935.4,337.5 936.8,331.6M862.1,356.3 858.2,361.6 858.6,365.2 864.6,375.2 864.2,377.0 853.9,375.2 847.2,375.2 841.8,374.8M847.2,375.2 847.2,379.4 841.8,379.4M853.9,375.2 858.2,378.0 858.6,385.1 858.2,389.8 851.4,391.2 848.2,393.7 846.5,396.9M864.2,377.0 873.1,370.5 873.1,367.3 876.3,364.8 886.6,368.4 893.8,364.8 904.4,364.8 911.9,366.6 916.9,370.5 920.8,370.2 927.9,368.1 935.0,367.2M873.1,370.5 870.3,381.9 864.6,390.8 863.5,397.2 858.2,400.4 853.6,399.4 850.4,403.7M892.3,351.9 904.4,364.8M928.2,349.1 927.9,354.5 924.3,355.2 927.9,359.8 931.4,363.8 935.0,367.2M850.7,404.7 853.9,403.8 866.0,403.8 867.4,409.0 874.6,411.2 876.0,408.0 880.2,409.0 884.5,409.0 884.5,416.9 886.3,423.1 892.3,422.0 892.3,427.4 885.2,429.6 885.2,441.4 890.2,446.6 883.1,448.1 872.4,445.8 856.8,445.8 848.8,445.3M881.7,449.2 881.7,463.2 878.1,463.2 878.1,488.4 868.9,489.6 865.7,489.2M878.1,474.1 881.0,482.0 887.4,478.8 894.8,478.0 899.1,473.7 903.0,469.8 911.5,464.0 905.5,457.5 897.0,447.3 890.2,446.6M911.5,464.0 918.3,464.8 920.8,472.9 920.4,478.4 921.1,482.0 924.0,482.2M918.3,464.8 922.6,460.5 924.3,454.8 924.0,448.1 924.3,443.2 915.1,440.6 915.1,439.2 909.8,440.6 903.0,447.9 897.0,447.3M892.3,422.0 897.0,423.1 902.6,425.6 908.0,427.4 913.0,431.1 913.0,426.7 908.0,425.3 908.7,419.5 908.0,415.9 916.5,412.3 924.0,416.6 927.9,416.9M916.5,412.3 911.5,399.0 910.1,392.6 912.2,388.0 912.6,380.2 918.3,375.5 916.2,370.2 911.9,366.6M915.1,439.2 924.3,433.3 923.3,431.5 925.0,427.8 925.4,421.6 924.0,416.6M927.9,368.1 929.3,369.8 931.4,377.0 927.9,382.3 927.5,386.6 940.7,393.7M915.4,386.6 927.5,386.6M910.1,392.6 915.4,391.5 916.5,386.9M911.5,399.0 916.5,394.7 915.4,391.5M927.9,416.9 931.1,424.2 940.3,424.9 950.6,420.5M931.4,433.3 934.3,435.1 932.5,442.5 932.2,444.7 929.0,435.1 924.3,433.3M797.4,349.1 795.6,364.8M807.0,343.6 808.8,358.0 811.3,361.3M810.2,343.6 812.7,360.6M797.0,343.6 807.0,343.6 810.2,343.6 815.5,340.4M787.4,345.8 797.0,348.3 797.0,343.6M778.6,346.5 777.5,355.9 780.3,361.6 780.2,367.3M777.5,355.9 773.6,356.6 770.4,352.7 766.1,358.4M770.4,352.7 767.2,347.3 759.7,350.5M758.3,337.7 758.3,341.1 753.7,344.0M903.0,497.4 907.3,489.6 911.5,492.4 908.3,497.0 903.0,497.4M917.2,482.8 920.8,482.0 920.4,478.4 917.2,478.8M928.6,265.7 931.1,273.1M931.1,273.1 933.2,264.9 933.6,259.9 934.6,257.3 937.1,253.5 935.7,251.3 935.0,246.5M935.4,245.6 937.1,242.1 942.1,242.1M775.5,218.6 777.8,217.7 783.5,218.4 785.0,220.1 782.5,222.9 782.1,229.0 780.3,229.2 782.1,235.8 780.7,240.3M800.6,211.4 804.5,213.8 809.5,214.8 813.0,215.8 818.4,216.2M833.7,209.4 831.9,207.4 831.9,198.9 828.7,197.3 831.2,193.2 834.0,190.1 836.2,182.6 829.8,179.9 827.6,179.9 821.9,177.1 816.1,170.9M829.8,179.9 828.7,172.6 828.3,167.0 831.9,164.6 832.6,158.8M828.7,172.6 824.8,169.2 819.1,169.8M834.0,190.1 841.1,190.6 844.3,193.7 842.9,197.3 839.0,199.4 836.9,196.3 831.9,198.9M841.1,190.6 853.2,190.6 852.5,186.9 856.1,183.7 860.3,182.6 867.4,184.7 867.8,187.9 864.2,193.7 858.9,196.3 855.7,195.8 851.1,194.8 844.3,193.7M855.7,195.8 855.7,200.4M856.1,183.7 850.4,176.0 859.6,171.5 858.9,162.3 857.5,154.6M859.6,171.5 867.1,174.9 873.8,179.9 867.4,184.7M873.8,179.9 887.4,182.0 892.3,174.3 890.9,168.7 892.0,161.7 890.6,154.0 888.1,151.9 876.7,151.2M837.6,148.5 842.2,149.1M846.5,121.7 849.0,115.4 851.4,103.8 850.0,88.4 856.8,80.3 858.9,66.7 865.3,54.0 871.4,44.5 878.1,39.6 880.2,39.1 891.3,50.3 890.9,63.1 892.7,69.3M880.2,39.1 882.7,36.6 898.4,40.6 898.7,32.6 906.6,28.4 910.1,38.6 909.8,39.1 908.3,47.4 913.7,52.2 910.1,59.5 914.0,70.1 912.2,76.9 915.8,84.4 913.7,86.8 919.4,93.1 905.8,111.1M909.8,39.1 916.9,33.6M893.4,129.2 904.4,131.9 906.6,118.2M881.8,140.9 895.9,139.7 901.6,143.5 907.3,140.3 904.4,131.9M901.6,143.5 897.7,152.2 890.6,154.0M888.1,151.9 887.7,147.9 882.7,146.3M890.9,168.7 903.0,168.7 915.4,169.8 920.1,165.2 923.3,157.6 917.2,147.9 907.3,140.3M920.1,165.2 928.2,164.1 933.2,174.9 942.1,177.7 949.2,179.3M887.4,182.0 885.9,185.8 888.4,187.9 895.5,189.5 901.6,186.3 907.3,200.9 912.6,202.4M901.6,186.3 910.8,187.9 913.7,196.3 907.3,200.9M867.8,187.9 873.8,189.0 879.9,185.3 885.9,185.8M864.2,193.7 866.0,195.8 873.8,198.9 879.2,197.3 882.4,196.3 888.4,187.9M879.2,197.3 883.1,204.5 887.7,206.0 888.4,209.4 897.7,210.2 903.0,207.9 908.7,209.7M888.4,209.4 886.6,216.7 888.8,221.5 894.1,220.5 899.8,221.5 901.6,218.6 906.6,218.2M899.8,221.5 901.6,221.5 899.6,224.3M878.8,229.2 881.7,223.8 888.8,221.5M876.0,218.6 879.9,217.2 880.2,222.4 881.7,223.8M874.6,204.0 876.0,210.9 879.9,217.2 886.6,216.7M855.4,200.9 862.5,199.4 866.0,195.8M863.2,202.4 874.6,204.0 873.8,198.9M863.2,202.4 864.6,207.4 869.6,213.3 872.8,215.8M874.6,204.0 879.2,197.3M781.0,147.6 778.2,150.9 781.0,153.1 784.6,153.4M28.3,392.2 28.3,415.5M-8.6,216.2 -6.5,210.9 -7.2,204.0 -0.1,202.9 5.9,186.3 -0.1,187.4 -7.2,189.5 -9.0,183.1 -19.7,178.2 -25.0,161.7 -35.7,157.0" fill="none" stroke="#55605e" stroke-width=".75" opacity=".8" stroke-linejoin="round"/><path d="M312.8,114.7 469.9,114.7M321.7,40.6 322.0,53.1 330.6,58.6 337.7,74.4 348.3,84.4 351.9,98.5 359.0,107.5 366.1,114.7M380.3,114.7 380.3,155.2 387.4,163.5 394.6,172.6 401.3,182.6M415.9,114.7 415.9,182.6M444.3,114.7 446.5,182.6M468.7,182.6 468.7,161.1 490.6,135.8M524.3,169.2 524.3,190.6 533.2,198.4 542.1,202.4M604.0,169.2 604.0,165.8 579.4,165.8 574.1,165.8 568.8,162.3 567.7,150.9 579.4,147.9 580.5,135.1 577.7,112.6M377.8,33.6 407.0,71.9 444.3,82.7 444.3,114.7M415.9,49.3 415.9,24.2M389.2,28.4 415.9,28.4M437.0,182.6 437.0,222.9M412.2,203.4 437.0,203.4M412.2,222.9 444.2,222.9M412.2,203.4 412.2,218.2M419.3,222.9 419.3,265.7M401.5,218.2 401.5,241.2 399.5,250.0 399.2,259.9M365.4,218.2 412.2,218.2M380.3,218.2 380.3,232.2 399.5,250.0M391.0,182.6 391.0,218.2M394.6,182.6 394.6,187.9 399.9,193.2 405.2,203.4 412.2,206.0M401.5,241.2 470.6,241.2M440.8,241.2 440.8,262.8 428.0,262.8M451.4,243.4 451.4,252.2 465.7,255.2 471.4,256.0 472.8,258.6 472.8,271.1M440.8,243.4 470.6,243.4M437.0,213.3 463.9,213.3M437.0,198.4 463.5,198.4M461.4,182.6 463.5,198.4 463.9,213.3 466.4,225.3 470.6,232.2 470.6,243.4M444.2,222.9 444.2,241.2M444.2,227.6 468.2,227.6M463.9,210.9 482.7,210.9M466.4,224.8 482.0,225.3M470.6,243.4 488.8,243.4M472.8,258.6 482.7,258.6M479.9,194.8 482.7,210.9 483.4,225.3 486.3,233.1 489.8,241.2 487.0,250.0 482.7,258.6 481.7,267.0 487.7,267.0 488.4,270.3M489.8,241.2 497.7,236.7 505.5,231.7 513.7,234.9 520.8,224.8 520.8,216.7M484.9,195.8 494.8,201.9 494.8,215.8 484.9,215.8M495.9,219.6 495.9,234.5M505.5,219.6 505.5,231.7M498.4,219.4 510.5,219.4M487.0,250.0 507.3,250.0 511.9,249.1 519.0,249.6 524.3,250.9 527.9,254.7M488.8,243.4 509.4,243.0 537.1,243.2M493.4,250.0 492.7,269.5M502.6,250.0 504.8,262.0 504.8,267.0 495.5,267.0 495.9,269.9M504.8,267.0 504.8,268.2 515.4,269.0 517.2,268.2M511.9,249.1 519.0,262.4M513.7,234.9 516.5,239.9 509.4,243.0M520.8,228.9 537.5,228.9M524.3,228.9 529.7,230.8 532.9,232.6 535.7,236.7M520.8,216.7 523.3,218.2M523.3,218.2 539.3,218.2 541.4,221.0M546.4,203.4 546.0,214.3 545.7,222.9M546.0,214.5 554.6,214.8M549.2,203.4 549.6,214.5M554.6,201.9 555.3,212.4M-0.1,128.5 14.1,121.7 24.8,103.8 31.9,101.5 28.3,84.4 39.0,80.3 46.1,67.5 60.3,65.8 71.0,49.3 88.8,39.6 99.4,35.6M60.3,65.8 74.6,80.3 92.3,77.8 106.6,71.9 113.7,80.3 124.3,71.9M31.9,101.5 46.1,107.5 49.7,118.9M92.3,77.8 88.8,100.0 97.0,100.8M106.6,71.9 106.6,49.3 97.7,33.6M113.7,80.3 115.4,96.2 111.9,95.8M107.3,107.5 113.7,114.7 117.9,112.6M-0.1,162.9 5.2,165.8 3.4,177.1 7.0,185.8M-0.1,150.9 7.7,149.7M597.6,378.4 599.0,390.1 606.1,391.9 600.8,409.0 588.3,414.4 574.5,417.7M600.8,409.0 625.7,418.0 629.2,428.9 618.6,437.0 618.6,447.3 601.5,447.3M634.9,385.8 643.4,400.8 634.6,401.9 629.2,418.0M643.4,386.9 654.8,395.5 658.4,393.7 661.2,399.0 660.2,408.0 663.0,416.2 654.1,416.6 644.2,419.5 642.4,428.9 649.8,434.4 658.4,437.0 666.2,448.1M643.4,400.8 638.1,409.7 643.4,419.5M629.2,428.9 642.4,428.9M649.8,434.4 643.4,437.0 638.8,449.2 625.7,453.7 618.6,447.3M625.7,453.7 636.3,465.1 649.5,466.3 657.7,458.3 661.2,460.2M618.6,465.1 631.0,473.3 636.0,475.6M600.8,463.2 613.2,467.1 618.6,465.1 625.7,453.7M615.0,478.8 634.2,479.2M615.7,483.6 625.7,484.8 630.3,492.0M-14.3,436.6 -14.3,501.9M17.7,442.5 17.7,478.8 28.3,478.8 28.3,529.3M28.3,478.8 28.3,490.8 56.8,489.2 67.4,488.0 72.8,487.6M-14.3,478.8 17.7,478.8M28.3,511.7 39.0,520.4 49.7,520.4 53.9,523.9 60.3,527.0M584.8,464.0 584.8,476.8" fill="none" stroke="#55605e" stroke-width=".7" opacity=".7" stroke-dasharray="2.4 2"/><path d="M184.9,0.0 197.0,25.0 206.9,48.4 207.8,69.6 166.3,112.0 138.0,152.0 132.0,159.0 168.0,188.0 168.2,388.7 239.9,388.7 239.9,376.9 229.1,376.9 229.1,362.5 252.1,362.5 278.2,424.5 261.4,424.5 261.4,412.0 209.1,412.0 199.4,421.6 199.4,434.2 194.0,442.4 194.0,561.3 168.2,593.6 168.2,625.0" fill="none" stroke="#5d5560" stroke-width="1.15" stroke-dasharray="6.2 2.8" opacity=".68"/><path d="M0.0,383.2 936.0,383.2" fill="none" stroke="#6e5560" stroke-width="1.5" stroke-dasharray="6.6 3.3" opacity=".72"/><path d="M168.0,0V625M808.0,0V625" stroke="#fff" stroke-width="1" opacity=".12"/><path d="M0,63.0H936" stroke="#fff" stroke-width="1" opacity=".10"/>
<g font-family="Liberation Sans,sans-serif" font-size="11" fill="#262626" stroke="#fff" stroke-width="2.8" stroke-linejoin="round" stroke-opacity=".95" style="paint-order:stroke"><text x="666.0" y="3.5" text-anchor="middle">Groenland</text><text x="902.0" y="58.0" text-anchor="middle">Finlande</text><text x="867.0" y="84.0" text-anchor="middle">Suède</text><text x="742.0" y="80.0" text-anchor="middle">Islande</text><text x="837.0" y="112.0" text-anchor="middle">Norvège</text><text x="793.0" y="145.0" text-anchor="middle">Royaume-Uni</text><text x="874.0" y="164.0" text-anchor="middle">Pologne</text><text x="844.0" y="183.0" text-anchor="middle">Allemagne</text><text x="814.0" y="202.0" text-anchor="middle">France</text><text x="851.0" y="215.0" text-anchor="middle">Italie</text><text x="795.0" y="223.0" text-anchor="middle">Espagne</text><text x="438.0" y="153.0" text-anchor="middle">Canada</text><text x="449.0" y="232.0" text-anchor="middle">États-Unis</text><text x="444.0" y="299.0" text-anchor="middle">Mexique</text><text x="27.0" y="235.0" text-anchor="middle">Japon</text><text x="814.0" y="282.0" text-anchor="middle">Algérie</text><text x="870.0" y="287.0" text-anchor="middle">Libye</text><text x="914.0" y="281.0" text-anchor="middle">Égypte</text><text x="807.0" y="321.0" text-anchor="middle">Mali</text><text x="844.0" y="322.0" text-anchor="middle">Niger</text><text x="877.0" y="336.0" text-anchor="middle">Tchad</text><text x="916.0" y="325.0" text-anchor="middle">Soudan</text><text x="836.0" y="352.0" text-anchor="middle">Nigeria</text><text x="572.0" y="357.0" text-anchor="middle">Venezuela</text><text x="537.0" y="373.0" text-anchor="middle">Colombie</text><text x="889.0" y="392.0" text-anchor="middle">RD Congo</text><text x="536.0" y="426.0" text-anchor="middle">Pérou</text><text x="609.0" y="417.0" text-anchor="middle">Brésil</text><text x="577.0" y="446.0" text-anchor="middle">Bolivie</text><text x="866.0" y="431.0" text-anchor="middle">Angola</text><text x="864.0" y="457.0" text-anchor="middle">Namibie</text><text x="894.0" y="472.0" text-anchor="middle">Botswana</text><text x="557.0" y="485.0" text-anchor="middle">Chili</text><text x="878.0" y="507.0" text-anchor="middle">Afrique</text><text x="878.0" y="520.0" text-anchor="middle">du Sud</text><text x="586.0" y="537.0" text-anchor="middle">Argentine</text><text x="120.0" y="543.0" text-anchor="middle">Nouvelle-Zélande</text><text x="903.0" y="182.0">Ukraine</text><text x="914.0" y="236.0">Türkiye</text><text x="930.0" y="356.0">Éthiopie</text><text x="928.0" y="384.0">Kenya</text><text x="914.0" y="409.0">Tanzanie</text><text x="122.0" y="409.0" text-anchor="end">Papouasie-Nouvelle-Guinée</text><text x="28.0" y="478.0" text-anchor="end">Australie</text></g><g font-family="Liberation Sans,sans-serif" font-size="11" fill="#262626" stroke="#262626" stroke-width=".32"><text x="666.0" y="3.5" text-anchor="middle">Groenland</text><text x="902.0" y="58.0" text-anchor="middle">Finlande</text><text x="867.0" y="84.0" text-anchor="middle">Suède</text><text x="742.0" y="80.0" text-anchor="middle">Islande</text><text x="837.0" y="112.0" text-anchor="middle">Norvège</text><text x="793.0" y="145.0" text-anchor="middle">Royaume-Uni</text><text x="874.0" y="164.0" text-anchor="middle">Pologne</text><text x="844.0" y="183.0" text-anchor="middle">Allemagne</text><text x="814.0" y="202.0" text-anchor="middle">France</text><text x="851.0" y="215.0" text-anchor="middle">Italie</text><text x="795.0" y="223.0" text-anchor="middle">Espagne</text><text x="438.0" y="153.0" text-anchor="middle">Canada</text><text x="449.0" y="232.0" text-anchor="middle">États-Unis</text><text x="444.0" y="299.0" text-anchor="middle">Mexique</text><text x="27.0" y="235.0" text-anchor="middle">Japon</text><text x="814.0" y="282.0" text-anchor="middle">Algérie</text><text x="870.0" y="287.0" text-anchor="middle">Libye</text><text x="914.0" y="281.0" text-anchor="middle">Égypte</text><text x="807.0" y="321.0" text-anchor="middle">Mali</text><text x="844.0" y="322.0" text-anchor="middle">Niger</text><text x="877.0" y="336.0" text-anchor="middle">Tchad</text><text x="916.0" y="325.0" text-anchor="middle">Soudan</text><text x="836.0" y="352.0" text-anchor="middle">Nigeria</text><text x="572.0" y="357.0" text-anchor="middle">Venezuela</text><text x="537.0" y="373.0" text-anchor="middle">Colombie</text><text x="889.0" y="392.0" text-anchor="middle">RD Congo</text><text x="536.0" y="426.0" text-anchor="middle">Pérou</text><text x="609.0" y="417.0" text-anchor="middle">Brésil</text><text x="577.0" y="446.0" text-anchor="middle">Bolivie</text><text x="866.0" y="431.0" text-anchor="middle">Angola</text><text x="864.0" y="457.0" text-anchor="middle">Namibie</text><text x="894.0" y="472.0" text-anchor="middle">Botswana</text><text x="557.0" y="485.0" text-anchor="middle">Chili</text><text x="878.0" y="507.0" text-anchor="middle">Afrique</text><text x="878.0" y="520.0" text-anchor="middle">du Sud</text><text x="586.0" y="537.0" text-anchor="middle">Argentine</text><text x="120.0" y="543.0" text-anchor="middle">Nouvelle-Zélande</text><text x="903.0" y="182.0">Ukraine</text><text x="914.0" y="236.0">Türkiye</text><text x="930.0" y="356.0">Éthiopie</text><text x="928.0" y="384.0">Kenya</text><text x="914.0" y="409.0">Tanzanie</text><text x="122.0" y="409.0" text-anchor="end">Papouasie-Nouvelle-Guinée</text><text x="28.0" y="478.0" text-anchor="end">Australie</text></g><g font-family="Liberation Sans,sans-serif" font-size="15" fill="#1d7a8c" letter-spacing="2.3" text-anchor="middle"><text x="216.0" y="233.0">Océan</text><text x="216.0" y="250.0">Pacifique</text><text x="216.0" y="266.0">Nord</text><text x="664.0" y="241.0">Océan</text><text x="664.0" y="257.0">Atlantique</text><text x="664.0" y="274.0">Nord</text><text x="321.5" y="481.3">Océan</text><text x="321.5" y="498.0">Pacifique</text><text x="321.5" y="514.3">Sud</text><text x="756.5" y="479.0">Océan</text><text x="756.5" y="496.0">Atlantique</text><text x="756.5" y="512.0">Sud</text></g>
<g transform="translate(518.4 280.3)"><path d="M0,-.6 L-12.7,-11.9 A19.2,19.2 0 1 1 12.7,-11.9 Z" fill="#1d55d9" stroke="#1d55d9" stroke-width="1.2" stroke-linejoin="round"/><circle cx="0" cy="-26.3" r="7.6" fill="#fff"/></g><g transform="translate(799.6 327.3)"><path d="M0,-.6 L-12.7,-11.9 A19.2,19.2 0 1 1 12.7,-11.9 Z" fill="#1d55d9" stroke="#1d55d9" stroke-width="1.2" stroke-linejoin="round"/><circle cx="0" cy="-26.3" r="7.6" fill="#fff"/></g><g transform="translate(13.1 477.2)"><path d="M0,-.6 L-12.7,-11.9 A19.2,19.2 0 1 1 12.7,-11.9 Z" fill="#1d55d9" stroke="#1d55d9" stroke-width="1.2" stroke-linejoin="round"/><circle cx="0" cy="-26.3" r="7.6" fill="#fff"/></g><g transform="translate(54.3 509.4)"><path d="M0,-.6 L-12.7,-11.9 A19.2,19.2 0 1 1 12.7,-11.9 Z" fill="#1d55d9" stroke="#1d55d9" stroke-width="1.2" stroke-linejoin="round"/><circle cx="0" cy="-26.3" r="7.6" fill="#fff"/></g><g transform="translate(149.2 530.9)"><path d="M0,-.6 L-12.7,-11.9 A19.2,19.2 0 1 1 12.7,-11.9 Z" fill="#1d55d9" stroke="#1d55d9" stroke-width="1.2" stroke-linejoin="round"/><circle cx="0" cy="-26.3" r="7.6" fill="#fff"/></g><g transform="translate(398.0 209.8)" fill="#0000ff"><circle r="18" opacity=".6"/><circle r="23" opacity=".3"/><circle r="28" opacity=".2"/><text y="4.7" text-anchor="middle" font-family="Liberation Sans,sans-serif" font-size="12.8" fill="#fff" stroke="#fff" stroke-width=".45">2</text></g><g transform="translate(434.3 228.3)" fill="#0000ff"><circle r="18" opacity=".6"/><circle r="23" opacity=".3"/><circle r="28" opacity=".2"/><text y="4.7" text-anchor="middle" font-family="Liberation Sans,sans-serif" font-size="12.8" fill="#fff" stroke="#fff" stroke-width=".45">2</text></g><g transform="translate(385.3 244.8)" fill="#0000ff"><circle r="18" opacity=".6"/><circle r="23" opacity=".3"/><circle r="28" opacity=".2"/><text y="4.7" text-anchor="middle" font-family="Liberation Sans,sans-serif" font-size="12.8" fill="#fff" stroke="#fff" stroke-width=".45">3</text></g><g transform="translate(551.9 205.5)" fill="#0000ff"><circle r="18" opacity=".6"/><circle r="23" opacity=".3"/><circle r="28" opacity=".2"/><text y="4.7" text-anchor="middle" font-family="Liberation Sans,sans-serif" font-size="12.8" fill="#fff" stroke="#fff" stroke-width=".45">2</text></g><g transform="translate(841.8 110.5)" fill="#0000ff"><circle r="18" opacity=".6"/><circle r="23" opacity=".3"/><circle r="28" opacity=".2"/><text y="4.7" text-anchor="middle" font-family="Liberation Sans,sans-serif" font-size="12.8" fill="#fff" stroke="#fff" stroke-width=".45">2</text></g><g transform="translate(823.5 197.4)" fill="#ff0000"><circle r="18" opacity=".6"/><circle r="23" opacity=".3"/><circle r="28" opacity=".2"/><text y="4.7" text-anchor="middle" font-family="Liberation Sans,sans-serif" font-size="12.8" fill="#fff" stroke="#fff" stroke-width=".45">125</text></g><g transform="translate(911.7 217.1)" fill="#0000ff"><circle r="18" opacity=".6"/><circle r="23" opacity=".3"/><circle r="28" opacity=".2"/><text y="4.7" text-anchor="middle" font-family="Liberation Sans,sans-serif" font-size="12.8" fill="#fff" stroke="#fff" stroke-width=".45">2</text></g><g transform="translate(782.9 251.7)" fill="#0000ff"><circle r="18" opacity=".6"/><circle r="23" opacity=".3"/><circle r="28" opacity=".2"/><text y="4.7" text-anchor="middle" font-family="Liberation Sans,sans-serif" font-size="12.8" fill="#fff" stroke="#fff" stroke-width=".45">5</text></g>
<g font-family="Liberation Sans,sans-serif" font-size="23.2" letter-spacing="-.75"><text x="12.0" y="616.0" fill="#fff" stroke="#fff" stroke-width="3.4" stroke-linejoin="round" opacity=".92">Google</text><text x="12.0" y="616.0" stroke-width=".7"><tspan fill="#4285f4" stroke="#4285f4">G</tspan><tspan fill="#ea4335" stroke="#ea4335">o</tspan><tspan fill="#fbbc05" stroke="#fbbc05">o</tspan><tspan fill="#4285f4" stroke="#4285f4">g</tspan><tspan fill="#34a853" stroke="#34a853">l</tspan><tspan fill="#ea4335" stroke="#ea4335">e</tspan></text></g><rect x="480.0" y="609.0" width="456.0" height="16" fill="#fff" opacity=".72"/><rect x="595.0" y="609.0" width="1.5" height="16" fill="#62cde4" opacity=".55"/><rect x="794.0" y="609.0" width="1.5" height="16" fill="#62cde4" opacity=".55"/><g font-family="Liberation Sans,sans-serif" font-size="11.8" fill="#111"><text x="487.4" y="621.0" textLength="100.3" lengthAdjust="spacingAndGlyphs">Raccourcis clavier</text><text x="603.1" y="621.0" textLength="183.4" lengthAdjust="spacingAndGlyphs">Données cartographiques ©2025</text><text x="801.9" y="621.0" textLength="126.5" lengthAdjust="spacingAndGlyphs">Conditions d'utilisation</text></g>
</svg>
<!-- item 1 -->
<div class="a thumb" style="top:369px"><svg width="160" height="107" viewBox="0 0 160 107">
<defs>
<filter id="nz1" x="0" y="0" width="100%" height="100%"><feTurbulence type="fractalNoise" baseFrequency=".38" numOctaves="2" seed="4"/><feColorMatrix type="matrix" values="0 0 0 0 .38  0 0 0 0 .36  0 0 0 0 .36  0 0 0 3.4 -1.5"/><feComposite in2="SourceGraphic" operator="in"/></filter>
<filter id="nz2" x="0" y="0" width="100%" height="100%"><feTurbulence type="fractalNoise" baseFrequency=".45" numOctaves="2" seed="9"/><feColorMatrix type="matrix" values="0 0 0 0 .86  0 0 0 0 .9  0 0 0 0 1  0 0 0 3 -1.95"/><feComposite in2="SourceGraphic" operator="in"/></filter>
<filter id="nz3" x="0" y="0" width="100%" height="100%"><feTurbulence type="fractalNoise" baseFrequency=".8" numOctaves="2" seed="2"/><feColorMatrix type="matrix" values="0 0 0 0 .3  0 0 0 0 .3  0 0 0 0 .3  0 0 0 1.2 -.55"/><feComposite in2="SourceGraphic" operator="in"/></filter>
<filter id="sb" x="-10%" y="-10%" width="120%" height="120%"><feGaussianBlur stdDeviation=".7"/></filter>
</defs>
<rect width="160" height="107" fill="#7b7b7c"/>
<g filter="url(#sb)">
<polygon points="68,0 160,0 160,67 68,40" fill="#e7e8f5"/>
<polygon points="0,34 68,40 160,67 160,86 100,66 60,52 0,38" fill="#a19f9c"/>
<polygon points="0,40 30,51 62,65 102,82 150,102 160,106 160,107 148,107 100,87.500 60,70 28,55.500 0,45" fill="#7c9150"/>
<polygon points="0,64 49,86 39,97 18,90 0,80" fill="#515253"/>
<polygon points="0,96 22,107 0,107" fill="#565758"/>
<g fill="#36524f"><rect x="76" y="0" width="10.500" height="9"/><rect x="95" y="0" width="10.500" height="38"/><rect x="113" y="4" width="14" height="44"/><rect x="134" y="8" width="17" height="51.500"/><rect x="157" y="40" width="3" height="26"/></g>
<g fill="#8296be"><rect x="95" y="9" width="10.500" height="11"/><rect x="95" y="29" width="10.500" height="8.500"/><rect x="113" y="13.700" width="14" height="9.500"/><rect x="113" y="34" width="14" height="7"/><rect x="134" y="19.400" width="17" height="10"/><rect x="134" y="40.300" width="17" height="9"/></g>
<g stroke="#dfe2ee" stroke-width="1"><path d="M100,0v38M120,4v44M142.500,8v51"/></g>
<ellipse cx="86" cy="50" rx="9" ry="4.500" fill="#6c8c47"/><ellipse cx="137" cy="70" rx="11" ry="6" fill="#55803a"/><ellipse cx="158" cy="78" rx="4" ry="5" fill="#5c8a3c"/>
<rect x="56" y="44" width="3.500" height="22" fill="#7d6b52"/><polygon points="60,58 70,50 71,52 61,62" fill="#7a7068"/><rect x="25" y="40" width="2" height="12" fill="#7d7468"/>
<rect x="132.500" y="53" width="2" height="31" fill="#aeb3bb"/><polygon points="100,70 104,70 103,82 100,82" fill="#7a6c60"/>
<path d="M0,0H76L92,5 97,22 88,38 74,44 62,53 48,50 30,44 12,42 0,40Z" fill="#7194cf"/>
<path d="M0,0H40L30,10 14,16 0,20Z" fill="#84899a"/><ellipse cx="44" cy="22" rx="12" ry="6" fill="#8a8c9c"/>
<path d="M0,30 10,32 8,40 0,40Z" fill="#20403c"/>
<ellipse cx="106" cy="61" rx="21.500" ry="16" fill="#93a4c8"/><ellipse cx="104" cy="56" rx="13" ry="8" fill="#86a3d8"/>
<ellipse cx="148" cy="83" rx="12" ry="13" fill="#8d95ac"/><ellipse cx="153" cy="36" rx="6" ry="9" fill="#7c9cd6"/><ellipse cx="156" cy="62" rx="5" ry="6" fill="#7f9fd8"/>
</g>
<g filter="url(#nz1)"><path d="M0,0H76L92,5 97,22 88,38 74,44 62,53 48,50 30,44 12,42 0,40Z"/><ellipse cx="106" cy="61" rx="21.500" ry="16"/><ellipse cx="148" cy="83" rx="12" ry="13"/></g>
<g filter="url(#nz2)"><path d="M0,0H76L92,5 97,22 88,38 74,44 62,53 48,50 30,44 12,42 0,40Z"/><ellipse cx="106" cy="61" rx="21.500" ry="16"/><ellipse cx="148" cy="83" rx="12" ry="13"/></g>
<g filter="url(#nz3)" opacity=".5"><polygon points="0,46 28,56 60,71 100,88 146,107 0,107"/></g>
<g filter="url(#sb)">
<ellipse cx="12" cy="55" rx="7" ry="4" fill="#1f2227" transform="rotate(18 12 55)"/><ellipse cx="23" cy="59" rx="6.500" ry="4" fill="#25272c" transform="rotate(18 23 59)"/><rect x="21" y="59" width="3" height="2" fill="#b8283a"/>
<rect x="27" y="60.500" width="27" height="11.500" rx="5" fill="#26282c" transform="rotate(22 40.500 66.500)"/><rect x="33" y="62" width="12" height="5" rx="2" fill="#3a3d44" transform="rotate(22 40.500 66.500)"/><rect x="47" y="71" width="3" height="2" fill="#a82a3a"/>
<rect x="88" y="87" width="35" height="14" rx="6" fill="#1c1d21" transform="rotate(23 105.500 94)"/><rect x="96" y="89" width="16" height="6" rx="2" fill="#33363c" transform="rotate(23 105.500 94)"/>
<ellipse cx="25.500" cy="97.500" rx="15.500" ry="7" fill="#b4b8c1" transform="rotate(24 25.500 97.500)"/><ellipse cx="24" cy="94" rx="8" ry="4" fill="#8e949c" transform="rotate(24 24 94)"/>
<ellipse cx="5" cy="87" rx="10" ry="7.500" fill="#2b3742" transform="rotate(30 5 87)"/><ellipse cx="3" cy="49" rx="5.500" ry="4.500" fill="#c5a11f"/>
<ellipse cx="48" cy="106" rx="6" ry="3" fill="#23242a"/>
<polygon points="148,107 160,88 160,107" fill="#13282e"/>
</g>
</svg></div>
<div class="a pt" style="top:401px">NavVis-VLX-Point-Cloud-Outdoor</div>
<div class="a ps" style="top:426px">12:54:42</div>
<svg class="a chev" style="top:412px" viewBox="0 0 16 22"><path d="M4 3l8 8-8 8"/></svg>

<!-- item 2 -->
<div class="a thumb" style="top:486px"><svg width="160" height="107" viewBox="0 0 160 107">
<defs>
<filter id="nz4" x="0" y="0" width="100%" height="100%"><feTurbulence type="fractalNoise" baseFrequency=".6" numOctaves="2" seed="7"/><feColorMatrix type="matrix" values="0 0 0 0 .1  0 0 0 0 .17  0 0 0 0 .2  0 0 0 2.6 -1.25"/><feComposite in2="SourceGraphic" operator="in"/></filter>
<filter id="nz5" x="0" y="0" width="100%" height="100%"><feTurbulence type="fractalNoise" baseFrequency=".5" numOctaves="2" seed="11"/><feColorMatrix type="matrix" values="0 0 0 0 .62  0 0 0 0 .64  0 0 0 0 .82  0 0 0 3 -1.75"/><feComposite in2="SourceGraphic" operator="in"/></filter>
</defs>
<rect width="160" height="107" fill="#1a2b33"/>
<g filter="url(#sb)">
<polygon points="0,59 25,63 26,53 28,53 29,70 45,70 45,57 48,52 62,52 64,50 98,54 104,50 108,58 124,60 155,58 156,66 160,66 160,78 120,82 92,84 89,96 83,107 40,107 22,92 8,90 0,90" fill="#b5b398"/>
<polygon points="47,58 108,60 112,72 90,78 47,76" fill="#cdcbb4"/>
<polygon points="112,62 156,61 160,70 160,76 92,82 92,73" fill="#d3d2c0"/>
<polygon points="0,60 26,64 28,78 0,82" fill="#cfceb8"/>
<polygon points="50,54 60,53 66,62 52,60" fill="#a5652b"/><polygon points="92,55 100,56 98,62 92,61" fill="#9a8a6a"/>
<polygon points="34,82 80,80 84,92 60,100 40,92" fill="#a8a8b8"/>
<polygon points="20,88 46,100 50,107 38,107 14,92" fill="#5a5768"/>
<polygon points="83,76 90,74 90,90 84,94" fill="#ae946a"/>
<polygon points="0,84 20,86 14,96 0,92" fill="#8d8c80"/><polygon points="0,92 12,96 8,104 0,100" fill="#3a4446"/>
<polygon points="5,94 8,93 7,100 4,100" fill="#8a9a40"/>
<g stroke="#d8d7c6" stroke-width="1"><path d="M62,50v8M74,51v8M82,51v8M98,52v8M105,49v12M27,53v10"/></g>
<g stroke="#52565a" stroke-width=".8" opacity=".7"><path d="M50,64h56M50,68h58M50,72h58M114,66h44M114,70h46M114,74h46M2,66h24M2,71h24M2,76h25"/></g>
</g>
<g filter="url(#nz4)"><polygon points="0,59 25,63 26,53 28,53 29,70 45,70 45,57 48,52 62,52 64,50 98,54 104,50 108,58 124,60 155,58 156,66 160,66 160,78 120,82 92,84 89,96 83,107 40,107 22,92 8,90 0,90"/></g>
<g filter="url(#nz5)"><polygon points="30,80 84,78 88,96 80,107 40,107 22,92"/></g>
</svg></div>
<div class="a pt" style="top:517px">Denver - RTC 360</div>
<div class="a ps" style="top:542px">12:47:47</div>
<svg class="a chev" style="top:528px" viewBox="0 0 16 22"><path d="M4 3l8 8-8 8"/></svg>

<!-- item 3 -->
<div class="a thumb" style="top:603px"><svg width="160" height="107" viewBox="0 0 160 107">
<defs><linearGradient id="g3" x1="0" y1="0" x2="1" y2="1"><stop offset="0" stop-color="#667c84"/><stop offset="1" stop-color="#586d75"/></linearGradient></defs>
<rect width="160" height="107" fill="url(#g3)"/>
<polygon points="46,7 58,0 80,0 95,8 94,27 72,46 52,31 46,20" fill="#b3700f"/>
<polygon points="46,7 58,0 80,0 95,8 82,20 60,14" fill="#c98d22"/>
<polygon points="82,20 95,8 94,27 72,46 82,36" fill="#6e4a1a"/>
<polygon points="52,22 82,36 72,46 52,31" fill="#a87417"/><g filter="url(#nz6)" opacity=".8"><polygon points="46,7 58,0 80,0 95,8 94,27 72,46 52,31 46,20"/></g>
<ellipse cx="64" cy="13" rx="3" ry="3" fill="#3a2a1c"/><ellipse cx="76" cy="12" rx="5" ry="3" fill="#ecd890"/><ellipse cx="64" cy="4" rx="4" ry="2" fill="#e6c870"/>
<rect x="55" y="25" width="12" height="7" fill="#3f5c90" transform="rotate(28 55 25)"/><rect x="56" y="24" width="4" height="6" fill="#e8e8ee" transform="rotate(28 56 24)"/>
<polygon points="28,33 40,22 44,28 36,32" fill="#3f6a48"/><polygon points="38,20 46,16 47,30 42,30" fill="#6f78a6"/>
<g fill="#d9d2bd"><rect x="43" y="47" width="2" height="6" transform="rotate(15 43 47)"/><rect x="31" y="76" width="2.500" height="14" transform="rotate(14 31 76)"/><rect x="36" y="68" width="2" height="4"/><rect x="116" y="32" width="7" height="1.500"/><rect x="133" y="39" width="3" height="1.500"/><rect x="105" y="15" width="4" height="1.500"/><rect x="117" y="16" width="3" height="2"/></g>
</svg></div>
<div class="a pt" style="top:634px">Matterport 2</div>
<div class="a ps" style="top:659px">12:46:21</div>
<svg class="a chev" style="top:645px" viewBox="0 0 16 22"><path d="M4 3l8 8-8 8"/></svg>

<!-- item 4 -->
<div class="a thumb" style="top:719px"><svg width="160" height="107" viewBox="0 0 160 107">
<defs><filter id="nz6" x="0" y="0" width="100%" height="100%"><feTurbulence type="fractalNoise" baseFrequency=".45" numOctaves="2" seed="5"/><feColorMatrix type="matrix" values="0 0 0 0 .25  0 0 0 0 .26  0 0 0 0 .26  0 0 0 2 -1.12"/><feComposite in2="SourceGraphic" operator="in"/></filter>
<linearGradient id="fl" x1="0" y1="0" x2="0" y2="1"><stop offset="0" stop-color="#676a6a"/><stop offset=".5" stop-color="#606363"/><stop offset="1" stop-color="#585b5b"/></linearGradient></defs>
<rect width="160" height="107" fill="url(#fl)"/>
<g filter="url(#sb)">
<rect width="160" height="32" fill="#727474"/><rect x="50" y="0" width="43" height="33" fill="#7e7f7f"/><rect x="0" y="0" width="20" height="36" fill="#747474"/><rect x="120" y="0" width="30" height="30" fill="#6a6c6c"/>
<g fill="#6d7a85"><rect x="1.500" y="0" width="3.200" height="42"/><rect x="11" y="0" width="3.600" height="35.500"/><rect x="19.300" y="0" width="3.700" height="49.400"/><rect x="40.800" y="0" width="3.800" height="43"/><rect x="45.900" y="0" width="3.100" height="31.700"/><rect x="59.200" y="0" width="3.800" height="56.400"/><rect x="69.300" y="0" width="2.600" height="33"/><rect x="75.900" y="0" width="4.600" height="52"/><rect x="126.400" y="0" width="3.600" height="40.600"/><rect x="141.600" y="0" width="3.200" height="26.600"/></g>
<g fill="#c9aa1f"><rect x="1.500" y="0" width="3.200" height="2"/><rect x="11" y="0" width="3.600" height="1.500"/><rect x="19.300" y="0" width="3.700" height="4.400"/><rect x="40.800" y="0" width="3.800" height="2.500"/><rect x="59.200" y="0" width="3.800" height="3.800"/><rect x="69.300" y="0" width="2.600" height="1.200"/><rect x="75.900" y="0" width="4.600" height="4.400"/><rect x="126.400" y="0" width="3.600" height="5.700"/><rect x="141.600" y="0" width="3.200" height="2.500"/></g>
<g stroke="#8a877c" stroke-width="3.400" fill="none" stroke-linecap="round"><path d="M122.600,30.400 139,11.400"/><path d="M144,14 154,28" stroke-width="2.600"/></g>
<g stroke="#7c7a6c" stroke-width="2.200" fill="none"><path d="M70.600,95 92.200,54.500"/><path d="M120.700,54.500 142.900,91.300"/><path d="M121.300,36.800 141.600,65.900" stroke="#77766e"/></g>
<path d="M27.500,28H37.600V61L70.600,105 62,107 40,74 40,107H30V72L10,107H1L30,58Z" fill="#727c85"/>
<rect x="25.600" y="0" width="8.900" height="5.700" fill="#c4474a"/><rect x="25.600" y="5.700" width="8.900" height="8.300" fill="#2e5f86"/><rect x="25.600" y="14" width="9.400" height="14.500" fill="#c9aa1f"/>
<rect x="148" y="0" width="12" height="107" fill="#3c4242"/><rect x="150" y="0" width="5" height="107" fill="#4a5252"/>
<ellipse cx="52" cy="50" rx="5" ry="1.500" fill="#3a3c3c"/><ellipse cx="48" cy="37" rx="6" ry="1.500" fill="#3c3e3e"/><ellipse cx="80" cy="63" rx="6" ry="2.500" fill="#484a4a"/><ellipse cx="58" cy="80" rx="8" ry="3" fill="#4c4e4e"/>
<polygon points="1,85.500 8.500,83.500 8.500,85 1,87.500" fill="#e8e8e8"/>
</g>
<g filter="url(#nz6)"><rect width="160" height="107"/></g>
<rect x="93.400" y="0" width="17" height="34" fill="#e8e9ec"/><rect x="110.400" y="0" width="9" height="27" fill="#8b9b93"/><rect x="99.800" y="0" width="10.700" height="3.200" fill="#283838"/><rect x="101.700" y="22" width="8.800" height="6" fill="#3a2828"/><rect x="96" y="8" width="5" height="6" fill="#9fb0a8"/><rect x="93.400" y="18" width="4" height="12" fill="#d4d0e4"/>
<rect x="93.400" y="30" width="26" height="20.700" fill="#c8474c"/><rect x="110" y="22" width="11.300" height="22" fill="#dc5a60"/><rect x="97" y="31" width="9" height="9" fill="#b8393e"/><rect x="100" y="44" width="10" height="8" fill="#c25a66"/>
<rect x="93.400" y="47" width="26" height="29" fill="#1f4f80"/><rect x="93.400" y="49" width="10" height="27" fill="#233f5c"/><rect x="93.400" y="47" width="7" height="3.700" fill="#c8474c"/><rect x="107" y="68" width="9" height="8" fill="#3a6a7a"/>
<rect x="92.600" y="72" width="26.800" height="35" fill="#d9b61f"/><rect x="92.600" y="80" width="9" height="27" fill="#b89a1c"/><rect x="93.400" y="72" width="12" height="4" fill="#1f4f80"/><rect x="104" y="86" width="8" height="10" fill="#e2c22a"/>
</svg></div>
<div class="a pt" style="top:751px">NavVis-VLX Construction-site-sample-data</div>
<div class="a ps" style="top:776px">12:45:46</div>
<svg class="a chev" style="top:762px" viewBox="0 0 16 22"><path d="M4 3l8 8-8 8"/></svg>

</body>
</html>
